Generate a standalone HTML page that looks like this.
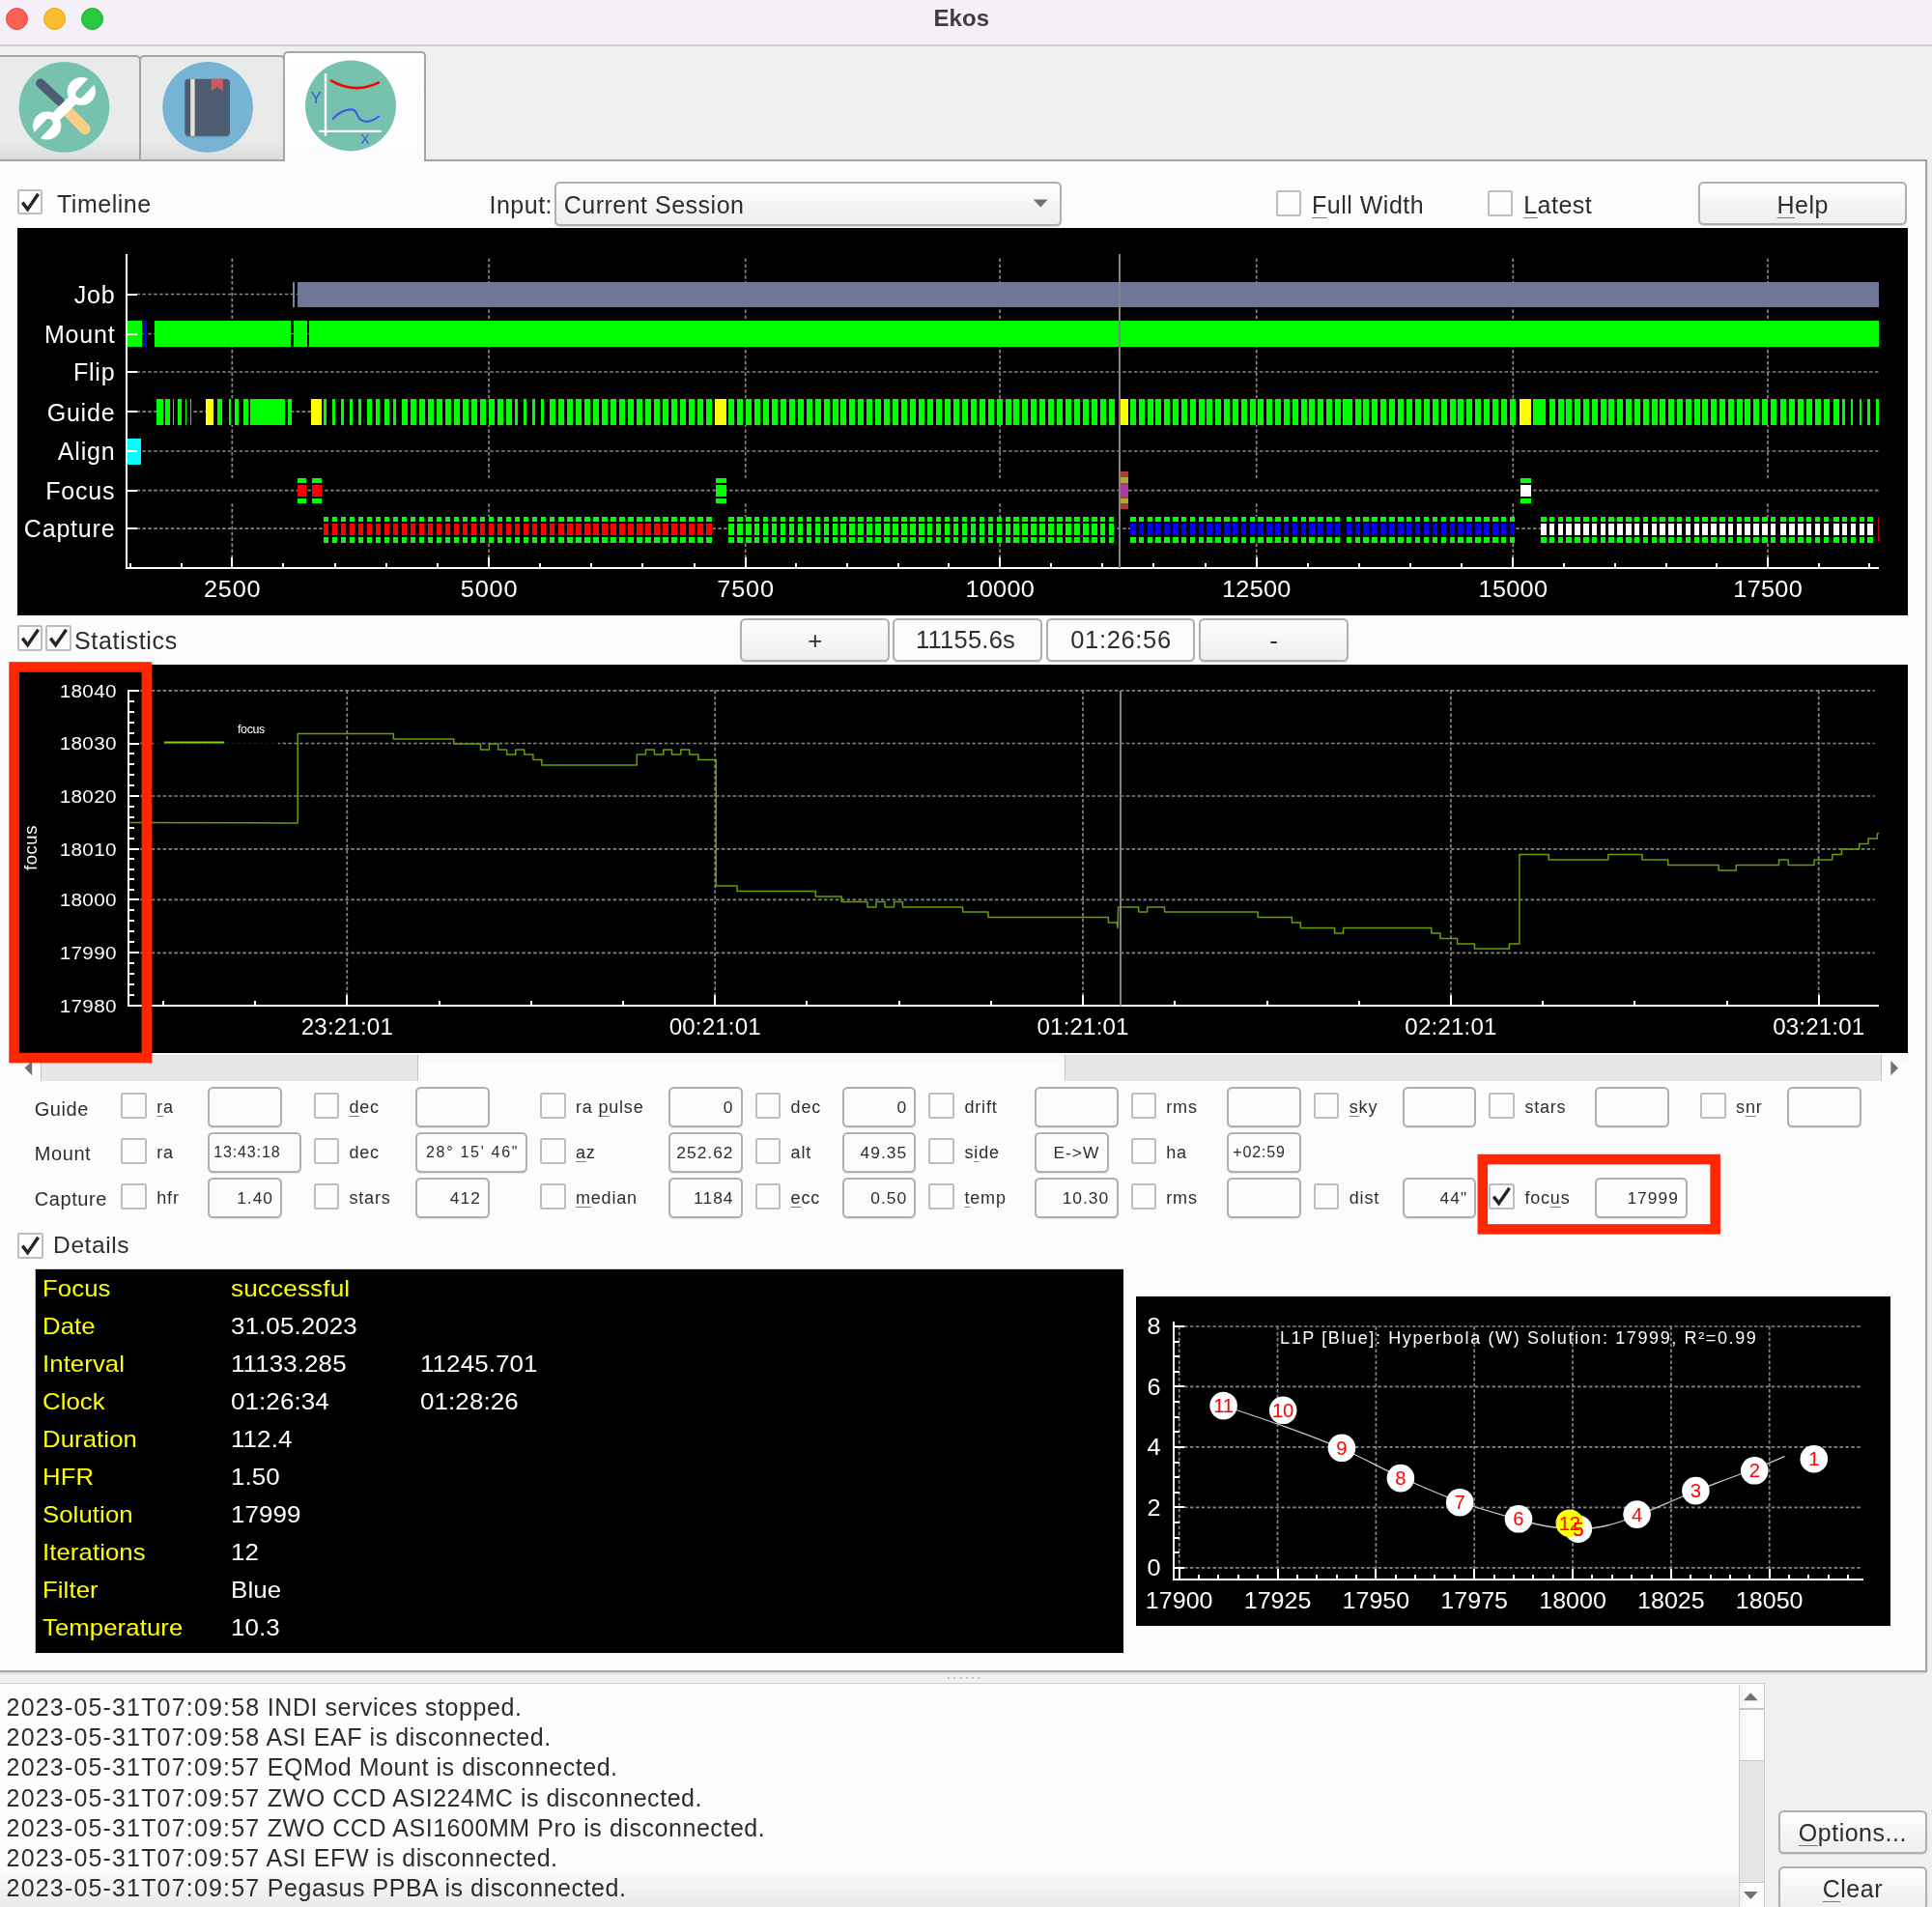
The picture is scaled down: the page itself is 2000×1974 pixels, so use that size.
<!DOCTYPE html>
<html lang="en"><head><meta charset="utf-8"><title>Ekos</title>
<style>
html,body{margin:0;padding:0;overflow:hidden}
body{width:2000px;height:1974px;position:relative;overflow:hidden;background:#eff0f1;font-family:"Liberation Sans", sans-serif;color:#2a2e32}
svg{position:absolute;left:0;top:0;font-family:"Liberation Sans", sans-serif}
.cb{position:absolute;box-sizing:border-box;width:26.5px;height:26.5px;border:2px solid #bbbdbe;border-radius:2.5px;background:#fcfcfc}
.box{position:absolute;box-sizing:border-box;border:2px solid #aeafb0;border-radius:5.5px;background:#fcfcfc;box-shadow:0 1px 1px rgba(0,0,0,.10)}
.btn{position:absolute;box-sizing:border-box;border:2px solid #aeafb0;border-radius:5.5px;background:linear-gradient(#fdfdfd,#eeeeee);box-shadow:0 1px 1px rgba(0,0,0,.12)}
u{text-decoration:underline;text-decoration-thickness:1.2px;text-underline-offset:0.15em;text-decoration-color:rgba(42,46,50,.62)}

</style></head><body><div id="root" style="position:absolute;left:0;top:0;width:2000px;height:1974px;overflow:hidden;will-change:transform">
<div style="position:absolute;left:0;top:0;width:2000px;height:46.4px;background:#f5f0f7;border-bottom:2px solid #cfcfd1"></div>
<div style="position:absolute;left:5.85px;top:7.95px;width:23.1px;height:23.1px;border-radius:50%;background:#fe5f57;box-sizing:border-box;border:1px solid #e2443d"></div>
<div style="position:absolute;left:45.05px;top:7.95px;width:23.1px;height:23.1px;border-radius:50%;background:#febc2e;box-sizing:border-box;border:1px solid #dea123"></div>
<div style="position:absolute;left:84.15px;top:7.95px;width:23.1px;height:23.1px;border-radius:50%;background:#28c840;box-sizing:border-box;border:1px solid #1aab29"></div>
<div style="position:absolute;top:6.78px;font-size:24px;line-height:24px;white-space:nowrap;color:#3f3b42;font-weight:bold;left:995.3px;transform:translateX(-50%);">Ekos</div>
<div style="position:absolute;left:-4px;top:56.7px;width:150.3px;height:110px;box-sizing:border-box;border:2px solid #a4a5a6;border-radius:5px 5px 0 0;background:linear-gradient(#e9eaea 80%,#dcdddd)"></div>
<div style="position:absolute;left:144.3px;top:56.7px;width:150.3px;height:110px;box-sizing:border-box;border:2px solid #a4a5a6;border-radius:5px 5px 0 0;background:linear-gradient(#e9eaea 80%,#dcdddd)"></div>
<div style="position:absolute;left:-3px;top:164.8px;width:1997.6px;height:1566px;box-sizing:border-box;border:2px solid #a4a5a6;background:#fcfcfc;box-shadow:0 1px 2px rgba(0,0,0,.12)"></div>
<div style="position:absolute;left:292.9px;top:52.9px;width:148.1px;height:113.8px;box-sizing:border-box;border:2px solid #a4a5a6;border-bottom:none;border-radius:5px 5px 0 0;background:linear-gradient(#ffffff,#fcfcfc)"></div>
<svg width="2000" height="175" viewBox="0 0 2000 175">
<defs><clipPath id="c1"><circle cx="66.5" cy="110.9" r="46.8"/></clipPath></defs>
<circle cx="66.5" cy="110.9" r="46.8" fill="#76c2af"/><g clip-path="url(#c1)">
<line x1="41.8" y1="86.2" x2="62" y2="105" stroke="#4f5d73" stroke-width="9.4" stroke-linecap="round"/>
<line x1="69" y1="114" x2="87.9" y2="133.3" stroke="#f5cf87" stroke-width="11.7" stroke-linecap="round"/>
<line x1="48.7" y1="130" x2="84.3" y2="94.5" stroke="#fff" stroke-width="10.5"/>
<circle cx="84.3" cy="94.5" r="14.6" fill="#fff"/><circle cx="48.7" cy="130" r="14.6" fill="#fff"/>
<line x1="82.6" y1="97" x2="100.5" y2="78" stroke="#76c2af" stroke-width="8.8" stroke-linecap="round"/>
<line x1="50.4" y1="127.5" x2="32.5" y2="146.5" stroke="#76c2af" stroke-width="8.8" stroke-linecap="round"/></g>
<circle cx="215.1" cy="110.9" r="46.8" fill="#77b3d4"/>
<rect x="191.3" y="83.3" width="46.7" height="59" rx="4" fill="#000" opacity=".12"/>
<rect x="191.3" y="81.8" width="46.7" height="59" rx="4" fill="#4f5d73"/>
<rect x="197.2" y="81.8" width="4.4" height="59" fill="#e8e4d4"/>
<path d="M218.9,81.8 H230.9 V94.3 L224.9,90 L218.9,94.3 Z" fill="#c75c5c"/>
<circle cx="363" cy="109.4" r="47" fill="#76c2af"/>
<line x1="337" y1="76" x2="337" y2="140.7" stroke="#fff" stroke-width="2.4"/>
<line x1="330.2" y1="135.9" x2="394.8" y2="135.9" stroke="#fff" stroke-width="2.4"/>
<path d="M342,83.1 Q367.5,98 392.7,85.2" fill="none" stroke="#f00" stroke-width="2.6"/>
<path d="M344.2,123.7 C352,114 366,110 369,117 C372,126 380,130 392.7,120" fill="none" stroke="#3b55e6" stroke-width="2"/>
<text x="327.1" y="106.5" font-size="17" fill="#3b55e6" text-anchor="middle">Y</text>
<text x="378" y="148.5" font-size="14" fill="#3b55e6" text-anchor="middle">X</text>
</svg>
<div class="cb" style="left:17.9px;top:195.6px"><svg width="26.5" height="26.5" viewBox="0 0 26.5 26.5" style="left:-2px;top:-2px"><path d="M5.2,13.6 L10.6,20.6 L21.6,4.8" fill="none" stroke="#232629" stroke-width="3.4" stroke-linejoin="miter"/></svg></div>
<div style="position:absolute;top:199.04px;font-size:25px;line-height:25px;white-space:nowrap;color:#2a2e32;letter-spacing:0.5px;left:59px;">Timeline</div>
<div style="position:absolute;top:199.54px;font-size:25px;line-height:25px;white-space:nowrap;color:#2a2e32;letter-spacing:0.5px;left:506.5px;">Input:</div>
<div class="btn" style="left:574.4px;top:188.2px;width:524.3px;height:45.4px"></div>
<div style="position:absolute;top:199.54px;font-size:25px;line-height:25px;white-space:nowrap;color:#2a2e32;letter-spacing:0.5px;left:583.7px;">Current Session</div>
<svg width="2000" height="240"><path d="M1069.7,206.5 h15 l-7.5,8 z" fill="#707375"/></svg>
<div class="cb" style="left:1320.7px;top:197.2px"></div>
<div style="position:absolute;top:199.54px;font-size:25px;line-height:25px;white-space:nowrap;color:#2a2e32;letter-spacing:0.5px;left:1358px;"><u>F</u>ull Width</div>
<div class="cb" style="left:1539.6px;top:197.2px"></div>
<div style="position:absolute;top:199.54px;font-size:25px;line-height:25px;white-space:nowrap;color:#2a2e32;letter-spacing:0.5px;left:1577.2px;"><u>L</u>atest</div>
<div class="btn" style="left:1758.3px;top:188.1px;width:215.6px;height:45.4px"></div>
<div style="position:absolute;top:199.54px;font-size:25px;line-height:25px;white-space:nowrap;color:#2a2e32;letter-spacing:0.5px;left:1866.25px;transform:translateX(-50%);"><u>H</u>elp</div>
<svg width="2000" height="1974" viewBox="0 0 2000 1974" shape-rendering="crispEdges">
<rect x="17.5" y="236.2" width="1957.2" height="400.6" fill="#000"/>
<g shape-rendering="geometricPrecision"><line x1="240.3" y1="267.5" x2="240.3" y2="588" stroke="#868686" stroke-width="1.7" stroke-dasharray="3.5 2.4"/><line x1="506.1" y1="267.5" x2="506.1" y2="588" stroke="#868686" stroke-width="1.7" stroke-dasharray="3.5 2.4"/><line x1="771.7" y1="267.5" x2="771.7" y2="588" stroke="#868686" stroke-width="1.7" stroke-dasharray="3.5 2.4"/><line x1="1035.1" y1="267.5" x2="1035.1" y2="588" stroke="#868686" stroke-width="1.7" stroke-dasharray="3.5 2.4"/><line x1="1300.7" y1="267.5" x2="1300.7" y2="588" stroke="#868686" stroke-width="1.7" stroke-dasharray="3.5 2.4"/><line x1="1566.3" y1="267.5" x2="1566.3" y2="588" stroke="#868686" stroke-width="1.7" stroke-dasharray="3.5 2.4"/><line x1="1830" y1="267.5" x2="1830" y2="588" stroke="#868686" stroke-width="1.7" stroke-dasharray="3.5 2.4"/></g>
<rect x="162.3" y="413.4" width="36" height="26.6" fill="#000"/><rect x="212.5" y="413.4" width="89.2" height="26.6" fill="#000"/><rect x="321.8" y="413.4" width="1623" height="26.6" fill="#000"/><rect x="334.7" y="535.2" width="403.3" height="26.5" fill="#000"/><rect x="754.1" y="535.2" width="399.3" height="26.5" fill="#000"/><rect x="1170" y="535.2" width="398.4" height="26.5" fill="#000"/><rect x="1595" y="535.2" width="349" height="26.5" fill="#000"/><rect x="238.3" y="494.9" width="4" height="26.3" fill="#000"/><rect x="504.1" y="494.9" width="4" height="26.3" fill="#000"/><rect x="769.7" y="494.9" width="4" height="26.3" fill="#000"/><rect x="1033.1" y="494.9" width="4" height="26.3" fill="#000"/><rect x="1298.7" y="494.9" width="4" height="26.3" fill="#000"/><rect x="1564.3" y="494.9" width="4" height="26.3" fill="#000"/><rect x="1828" y="494.9" width="4" height="26.3" fill="#000"/>
<g shape-rendering="geometricPrecision"><line x1="141.5" y1="304.5" x2="1944.5" y2="304.5" stroke="#868686" stroke-width="1.7" stroke-dasharray="3.5 2.4"/><line x1="141.5" y1="345.5" x2="1944.5" y2="345.5" stroke="#868686" stroke-width="1.7" stroke-dasharray="3.5 2.4"/><line x1="141.5" y1="385" x2="1944.5" y2="385" stroke="#868686" stroke-width="1.7" stroke-dasharray="3.5 2.4"/><line x1="141.5" y1="426.2" x2="1944.5" y2="426.2" stroke="#868686" stroke-width="1.7" stroke-dasharray="3.5 2.4"/><line x1="141.5" y1="467" x2="1944.5" y2="467" stroke="#868686" stroke-width="1.7" stroke-dasharray="3.5 2.4"/><line x1="141.5" y1="507.6" x2="1944.5" y2="507.6" stroke="#868686" stroke-width="1.7" stroke-dasharray="3.5 2.4"/><line x1="141.5" y1="547.1" x2="1944.5" y2="547.1" stroke="#868686" stroke-width="1.7" stroke-dasharray="3.5 2.4"/></g>
<g><rect x="162.3" y="424" width="36" height="5" fill="#000"/><rect x="212.5" y="424" width="89.2" height="5" fill="#000"/><rect x="321.8" y="424" width="1623" height="5" fill="#000"/><rect x="334.7" y="545.5" width="403.3" height="5" fill="#000"/><rect x="754.1" y="545.5" width="399.3" height="5" fill="#000"/><rect x="1170" y="545.5" width="398.4" height="5" fill="#000"/><rect x="1595" y="545.5" width="349" height="5" fill="#000"/><rect x="303.4" y="292.1" width="2" height="25.9" fill="#7c84a3"/><rect x="307.6" y="292.1" width="1636.9" height="25.9" fill="#6e7798"/><rect x="131" y="332.4" width="16.3" height="26.3" fill="#00ff00"/><rect x="149.3" y="332.4" width="3.1" height="26.3" fill="#0000ff"/><rect x="159.8" y="332.4" width="141.6" height="26.3" fill="#00ff00"/><rect x="303.6" y="332.4" width="14.4" height="26.3" fill="#00ff00"/><rect x="320" y="332.4" width="1624.5" height="26.3" fill="#00ff00"/><rect x="131" y="454.2" width="15" height="26.3" fill="#00ffff"/><rect x="334.7" y="535.2" width="5.5" height="5.2" fill="#00ff00"/><rect x="334.7" y="542" width="5.5" height="12.3" fill="#ff0000"/><rect x="334.7" y="556.3" width="5.5" height="5.4" fill="#00ff00"/><rect x="343.71" y="535.2" width="5.5" height="5.2" fill="#00ff00"/><rect x="343.71" y="542" width="5.5" height="12.3" fill="#ff0000"/><rect x="343.71" y="556.3" width="5.5" height="5.4" fill="#00ff00"/><rect x="352.72" y="535.2" width="5.5" height="5.2" fill="#00ff00"/><rect x="352.72" y="542" width="5.5" height="12.3" fill="#ff0000"/><rect x="352.72" y="556.3" width="5.5" height="5.4" fill="#00ff00"/><rect x="361.73" y="535.2" width="5.5" height="5.2" fill="#00ff00"/><rect x="361.73" y="542" width="5.5" height="12.3" fill="#ff0000"/><rect x="361.73" y="556.3" width="5.5" height="5.4" fill="#00ff00"/><rect x="370.74" y="535.2" width="5.5" height="5.2" fill="#00ff00"/><rect x="370.74" y="542" width="5.5" height="12.3" fill="#ff0000"/><rect x="370.74" y="556.3" width="5.5" height="5.4" fill="#00ff00"/><rect x="379.76" y="535.2" width="5.5" height="5.2" fill="#00ff00"/><rect x="379.76" y="542" width="5.5" height="12.3" fill="#ff0000"/><rect x="379.76" y="556.3" width="5.5" height="5.4" fill="#00ff00"/><rect x="388.77" y="535.2" width="5.5" height="5.2" fill="#00ff00"/><rect x="388.77" y="542" width="5.5" height="12.3" fill="#ff0000"/><rect x="388.77" y="556.3" width="5.5" height="5.4" fill="#00ff00"/><rect x="397.78" y="535.2" width="5.5" height="5.2" fill="#00ff00"/><rect x="397.78" y="542" width="5.5" height="12.3" fill="#ff0000"/><rect x="397.78" y="556.3" width="5.5" height="5.4" fill="#00ff00"/><rect x="406.79" y="535.2" width="5.5" height="5.2" fill="#00ff00"/><rect x="406.79" y="542" width="5.5" height="12.3" fill="#ff0000"/><rect x="406.79" y="556.3" width="5.5" height="5.4" fill="#00ff00"/><rect x="415.8" y="535.2" width="5.5" height="5.2" fill="#00ff00"/><rect x="415.8" y="542" width="5.5" height="12.3" fill="#ff0000"/><rect x="415.8" y="556.3" width="5.5" height="5.4" fill="#00ff00"/><rect x="424.81" y="535.2" width="5.5" height="5.2" fill="#00ff00"/><rect x="424.81" y="542" width="5.5" height="12.3" fill="#ff0000"/><rect x="424.81" y="556.3" width="5.5" height="5.4" fill="#00ff00"/><rect x="433.82" y="535.2" width="5.5" height="5.2" fill="#00ff00"/><rect x="433.82" y="542" width="5.5" height="12.3" fill="#ff0000"/><rect x="433.82" y="556.3" width="5.5" height="5.4" fill="#00ff00"/><rect x="442.83" y="535.2" width="5.5" height="5.2" fill="#00ff00"/><rect x="442.83" y="542" width="5.5" height="12.3" fill="#ff0000"/><rect x="442.83" y="556.3" width="5.5" height="5.4" fill="#00ff00"/><rect x="451.84" y="535.2" width="5.5" height="5.2" fill="#00ff00"/><rect x="451.84" y="542" width="5.5" height="12.3" fill="#ff0000"/><rect x="451.84" y="556.3" width="5.5" height="5.4" fill="#00ff00"/><rect x="460.85" y="535.2" width="5.5" height="5.2" fill="#00ff00"/><rect x="460.85" y="542" width="5.5" height="12.3" fill="#ff0000"/><rect x="460.85" y="556.3" width="5.5" height="5.4" fill="#00ff00"/><rect x="469.87" y="535.2" width="5.5" height="5.2" fill="#00ff00"/><rect x="469.87" y="542" width="5.5" height="12.3" fill="#ff0000"/><rect x="469.87" y="556.3" width="5.5" height="5.4" fill="#00ff00"/><rect x="478.88" y="535.2" width="5.5" height="5.2" fill="#00ff00"/><rect x="478.88" y="542" width="5.5" height="12.3" fill="#ff0000"/><rect x="478.88" y="556.3" width="5.5" height="5.4" fill="#00ff00"/><rect x="487.89" y="535.2" width="5.5" height="5.2" fill="#00ff00"/><rect x="487.89" y="542" width="5.5" height="12.3" fill="#ff0000"/><rect x="487.89" y="556.3" width="5.5" height="5.4" fill="#00ff00"/><rect x="496.9" y="535.2" width="5.5" height="5.2" fill="#00ff00"/><rect x="496.9" y="542" width="5.5" height="12.3" fill="#ff0000"/><rect x="496.9" y="556.3" width="5.5" height="5.4" fill="#00ff00"/><rect x="505.91" y="535.2" width="5.5" height="5.2" fill="#00ff00"/><rect x="505.91" y="542" width="5.5" height="12.3" fill="#ff0000"/><rect x="505.91" y="556.3" width="5.5" height="5.4" fill="#00ff00"/><rect x="514.92" y="535.2" width="5.5" height="5.2" fill="#00ff00"/><rect x="514.92" y="542" width="5.5" height="12.3" fill="#ff0000"/><rect x="514.92" y="556.3" width="5.5" height="5.4" fill="#00ff00"/><rect x="523.93" y="535.2" width="5.5" height="5.2" fill="#00ff00"/><rect x="523.93" y="542" width="5.5" height="12.3" fill="#ff0000"/><rect x="523.93" y="556.3" width="5.5" height="5.4" fill="#00ff00"/><rect x="532.94" y="535.2" width="5.5" height="5.2" fill="#00ff00"/><rect x="532.94" y="542" width="5.5" height="12.3" fill="#ff0000"/><rect x="532.94" y="556.3" width="5.5" height="5.4" fill="#00ff00"/><rect x="541.95" y="535.2" width="5.5" height="5.2" fill="#00ff00"/><rect x="541.95" y="542" width="5.5" height="12.3" fill="#ff0000"/><rect x="541.95" y="556.3" width="5.5" height="5.4" fill="#00ff00"/><rect x="550.96" y="535.2" width="5.5" height="5.2" fill="#00ff00"/><rect x="550.96" y="542" width="5.5" height="12.3" fill="#ff0000"/><rect x="550.96" y="556.3" width="5.5" height="5.4" fill="#00ff00"/><rect x="559.98" y="535.2" width="5.5" height="5.2" fill="#00ff00"/><rect x="559.98" y="542" width="5.5" height="12.3" fill="#ff0000"/><rect x="559.98" y="556.3" width="5.5" height="5.4" fill="#00ff00"/><rect x="568.99" y="535.2" width="5.5" height="5.2" fill="#00ff00"/><rect x="568.99" y="542" width="5.5" height="12.3" fill="#ff0000"/><rect x="568.99" y="556.3" width="5.5" height="5.4" fill="#00ff00"/><rect x="578" y="535.2" width="5.5" height="5.2" fill="#00ff00"/><rect x="578" y="542" width="5.5" height="12.3" fill="#ff0000"/><rect x="578" y="556.3" width="5.5" height="5.4" fill="#00ff00"/><rect x="587.01" y="535.2" width="5.5" height="5.2" fill="#00ff00"/><rect x="587.01" y="542" width="5.5" height="12.3" fill="#ff0000"/><rect x="587.01" y="556.3" width="5.5" height="5.4" fill="#00ff00"/><rect x="596.02" y="535.2" width="5.5" height="5.2" fill="#00ff00"/><rect x="596.02" y="542" width="5.5" height="12.3" fill="#ff0000"/><rect x="596.02" y="556.3" width="5.5" height="5.4" fill="#00ff00"/><rect x="605.03" y="535.2" width="5.5" height="5.2" fill="#00ff00"/><rect x="605.03" y="542" width="5.5" height="12.3" fill="#ff0000"/><rect x="605.03" y="556.3" width="5.5" height="5.4" fill="#00ff00"/><rect x="614.04" y="535.2" width="5.5" height="5.2" fill="#00ff00"/><rect x="614.04" y="542" width="5.5" height="12.3" fill="#ff0000"/><rect x="614.04" y="556.3" width="5.5" height="5.4" fill="#00ff00"/><rect x="623.05" y="535.2" width="5.5" height="5.2" fill="#00ff00"/><rect x="623.05" y="542" width="5.5" height="12.3" fill="#ff0000"/><rect x="623.05" y="556.3" width="5.5" height="5.4" fill="#00ff00"/><rect x="632.06" y="535.2" width="5.5" height="5.2" fill="#00ff00"/><rect x="632.06" y="542" width="5.5" height="12.3" fill="#ff0000"/><rect x="632.06" y="556.3" width="5.5" height="5.4" fill="#00ff00"/><rect x="641.07" y="535.2" width="5.5" height="5.2" fill="#00ff00"/><rect x="641.07" y="542" width="5.5" height="12.3" fill="#ff0000"/><rect x="641.07" y="556.3" width="5.5" height="5.4" fill="#00ff00"/><rect x="650.08" y="535.2" width="5.5" height="5.2" fill="#00ff00"/><rect x="650.08" y="542" width="5.5" height="12.3" fill="#ff0000"/><rect x="650.08" y="556.3" width="5.5" height="5.4" fill="#00ff00"/><rect x="659.1" y="535.2" width="5.5" height="5.2" fill="#00ff00"/><rect x="659.1" y="542" width="5.5" height="12.3" fill="#ff0000"/><rect x="659.1" y="556.3" width="5.5" height="5.4" fill="#00ff00"/><rect x="668.11" y="535.2" width="5.5" height="5.2" fill="#00ff00"/><rect x="668.11" y="542" width="5.5" height="12.3" fill="#ff0000"/><rect x="668.11" y="556.3" width="5.5" height="5.4" fill="#00ff00"/><rect x="677.12" y="535.2" width="5.5" height="5.2" fill="#00ff00"/><rect x="677.12" y="542" width="5.5" height="12.3" fill="#ff0000"/><rect x="677.12" y="556.3" width="5.5" height="5.4" fill="#00ff00"/><rect x="686.13" y="535.2" width="5.5" height="5.2" fill="#00ff00"/><rect x="686.13" y="542" width="5.5" height="12.3" fill="#ff0000"/><rect x="686.13" y="556.3" width="5.5" height="5.4" fill="#00ff00"/><rect x="695.14" y="535.2" width="5.5" height="5.2" fill="#00ff00"/><rect x="695.14" y="542" width="5.5" height="12.3" fill="#ff0000"/><rect x="695.14" y="556.3" width="5.5" height="5.4" fill="#00ff00"/><rect x="704.15" y="535.2" width="5.5" height="5.2" fill="#00ff00"/><rect x="704.15" y="542" width="5.5" height="12.3" fill="#ff0000"/><rect x="704.15" y="556.3" width="5.5" height="5.4" fill="#00ff00"/><rect x="713.16" y="535.2" width="5.5" height="5.2" fill="#00ff00"/><rect x="713.16" y="542" width="5.5" height="12.3" fill="#ff0000"/><rect x="713.16" y="556.3" width="5.5" height="5.4" fill="#00ff00"/><rect x="722.17" y="535.2" width="5.5" height="5.2" fill="#00ff00"/><rect x="722.17" y="542" width="5.5" height="12.3" fill="#ff0000"/><rect x="722.17" y="556.3" width="5.5" height="5.4" fill="#00ff00"/><rect x="731.18" y="535.2" width="5.5" height="5.2" fill="#00ff00"/><rect x="731.18" y="542" width="5.5" height="12.3" fill="#ff0000"/><rect x="731.18" y="556.3" width="5.5" height="5.4" fill="#00ff00"/><rect x="754.1" y="535.2" width="5.5" height="5.2" fill="#00ff00"/><rect x="754.1" y="542" width="5.5" height="12.3" fill="#00ff00"/><rect x="754.1" y="556.3" width="5.5" height="5.4" fill="#00ff00"/><rect x="763.05" y="535.2" width="5.5" height="5.2" fill="#00ff00"/><rect x="763.05" y="542" width="5.5" height="12.3" fill="#00ff00"/><rect x="763.05" y="556.3" width="5.5" height="5.4" fill="#00ff00"/><rect x="772" y="535.2" width="5.5" height="5.2" fill="#00ff00"/><rect x="772" y="542" width="5.5" height="12.3" fill="#00ff00"/><rect x="772" y="556.3" width="5.5" height="5.4" fill="#00ff00"/><rect x="780.95" y="535.2" width="5.5" height="5.2" fill="#00ff00"/><rect x="780.95" y="542" width="5.5" height="12.3" fill="#00ff00"/><rect x="780.95" y="556.3" width="5.5" height="5.4" fill="#00ff00"/><rect x="789.9" y="535.2" width="5.5" height="5.2" fill="#00ff00"/><rect x="789.9" y="542" width="5.5" height="12.3" fill="#00ff00"/><rect x="789.9" y="556.3" width="5.5" height="5.4" fill="#00ff00"/><rect x="798.85" y="535.2" width="5.5" height="5.2" fill="#00ff00"/><rect x="798.85" y="542" width="5.5" height="12.3" fill="#00ff00"/><rect x="798.85" y="556.3" width="5.5" height="5.4" fill="#00ff00"/><rect x="807.8" y="535.2" width="5.5" height="5.2" fill="#00ff00"/><rect x="807.8" y="542" width="5.5" height="12.3" fill="#00ff00"/><rect x="807.8" y="556.3" width="5.5" height="5.4" fill="#00ff00"/><rect x="816.75" y="535.2" width="5.5" height="5.2" fill="#00ff00"/><rect x="816.75" y="542" width="5.5" height="12.3" fill="#00ff00"/><rect x="816.75" y="556.3" width="5.5" height="5.4" fill="#00ff00"/><rect x="825.7" y="535.2" width="5.5" height="5.2" fill="#00ff00"/><rect x="825.7" y="542" width="5.5" height="12.3" fill="#00ff00"/><rect x="825.7" y="556.3" width="5.5" height="5.4" fill="#00ff00"/><rect x="834.65" y="535.2" width="5.5" height="5.2" fill="#00ff00"/><rect x="834.65" y="542" width="5.5" height="12.3" fill="#00ff00"/><rect x="834.65" y="556.3" width="5.5" height="5.4" fill="#00ff00"/><rect x="843.6" y="535.2" width="5.5" height="5.2" fill="#00ff00"/><rect x="843.6" y="542" width="5.5" height="12.3" fill="#00ff00"/><rect x="843.6" y="556.3" width="5.5" height="5.4" fill="#00ff00"/><rect x="852.55" y="535.2" width="5.5" height="5.2" fill="#00ff00"/><rect x="852.55" y="542" width="5.5" height="12.3" fill="#00ff00"/><rect x="852.55" y="556.3" width="5.5" height="5.4" fill="#00ff00"/><rect x="861.5" y="535.2" width="5.5" height="5.2" fill="#00ff00"/><rect x="861.5" y="542" width="5.5" height="12.3" fill="#00ff00"/><rect x="861.5" y="556.3" width="5.5" height="5.4" fill="#00ff00"/><rect x="870.45" y="535.2" width="5.5" height="5.2" fill="#00ff00"/><rect x="870.45" y="542" width="5.5" height="12.3" fill="#00ff00"/><rect x="870.45" y="556.3" width="5.5" height="5.4" fill="#00ff00"/><rect x="879.4" y="535.2" width="5.5" height="5.2" fill="#00ff00"/><rect x="879.4" y="542" width="5.5" height="12.3" fill="#00ff00"/><rect x="879.4" y="556.3" width="5.5" height="5.4" fill="#00ff00"/><rect x="888.35" y="535.2" width="5.5" height="5.2" fill="#00ff00"/><rect x="888.35" y="542" width="5.5" height="12.3" fill="#00ff00"/><rect x="888.35" y="556.3" width="5.5" height="5.4" fill="#00ff00"/><rect x="897.3" y="535.2" width="5.5" height="5.2" fill="#00ff00"/><rect x="897.3" y="542" width="5.5" height="12.3" fill="#00ff00"/><rect x="897.3" y="556.3" width="5.5" height="5.4" fill="#00ff00"/><rect x="906.25" y="535.2" width="5.5" height="5.2" fill="#00ff00"/><rect x="906.25" y="542" width="5.5" height="12.3" fill="#00ff00"/><rect x="906.25" y="556.3" width="5.5" height="5.4" fill="#00ff00"/><rect x="915.2" y="535.2" width="5.5" height="5.2" fill="#00ff00"/><rect x="915.2" y="542" width="5.5" height="12.3" fill="#00ff00"/><rect x="915.2" y="556.3" width="5.5" height="5.4" fill="#00ff00"/><rect x="924.15" y="535.2" width="5.5" height="5.2" fill="#00ff00"/><rect x="924.15" y="542" width="5.5" height="12.3" fill="#00ff00"/><rect x="924.15" y="556.3" width="5.5" height="5.4" fill="#00ff00"/><rect x="933.1" y="535.2" width="5.5" height="5.2" fill="#00ff00"/><rect x="933.1" y="542" width="5.5" height="12.3" fill="#00ff00"/><rect x="933.1" y="556.3" width="5.5" height="5.4" fill="#00ff00"/><rect x="942.05" y="535.2" width="5.5" height="5.2" fill="#00ff00"/><rect x="942.05" y="542" width="5.5" height="12.3" fill="#00ff00"/><rect x="942.05" y="556.3" width="5.5" height="5.4" fill="#00ff00"/><rect x="951" y="535.2" width="5.5" height="5.2" fill="#00ff00"/><rect x="951" y="542" width="5.5" height="12.3" fill="#00ff00"/><rect x="951" y="556.3" width="5.5" height="5.4" fill="#00ff00"/><rect x="959.95" y="535.2" width="5.5" height="5.2" fill="#00ff00"/><rect x="959.95" y="542" width="5.5" height="12.3" fill="#00ff00"/><rect x="959.95" y="556.3" width="5.5" height="5.4" fill="#00ff00"/><rect x="968.9" y="535.2" width="5.5" height="5.2" fill="#00ff00"/><rect x="968.9" y="542" width="5.5" height="12.3" fill="#00ff00"/><rect x="968.9" y="556.3" width="5.5" height="5.4" fill="#00ff00"/><rect x="977.85" y="535.2" width="5.5" height="5.2" fill="#00ff00"/><rect x="977.85" y="542" width="5.5" height="12.3" fill="#00ff00"/><rect x="977.85" y="556.3" width="5.5" height="5.4" fill="#00ff00"/><rect x="986.8" y="535.2" width="5.5" height="5.2" fill="#00ff00"/><rect x="986.8" y="542" width="5.5" height="12.3" fill="#00ff00"/><rect x="986.8" y="556.3" width="5.5" height="5.4" fill="#00ff00"/><rect x="995.75" y="535.2" width="5.5" height="5.2" fill="#00ff00"/><rect x="995.75" y="542" width="5.5" height="12.3" fill="#00ff00"/><rect x="995.75" y="556.3" width="5.5" height="5.4" fill="#00ff00"/><rect x="1004.7" y="535.2" width="5.5" height="5.2" fill="#00ff00"/><rect x="1004.7" y="542" width="5.5" height="12.3" fill="#00ff00"/><rect x="1004.7" y="556.3" width="5.5" height="5.4" fill="#00ff00"/><rect x="1013.65" y="535.2" width="5.5" height="5.2" fill="#00ff00"/><rect x="1013.65" y="542" width="5.5" height="12.3" fill="#00ff00"/><rect x="1013.65" y="556.3" width="5.5" height="5.4" fill="#00ff00"/><rect x="1022.6" y="535.2" width="5.5" height="5.2" fill="#00ff00"/><rect x="1022.6" y="542" width="5.5" height="12.3" fill="#00ff00"/><rect x="1022.6" y="556.3" width="5.5" height="5.4" fill="#00ff00"/><rect x="1031.55" y="535.2" width="5.5" height="5.2" fill="#00ff00"/><rect x="1031.55" y="542" width="5.5" height="12.3" fill="#00ff00"/><rect x="1031.55" y="556.3" width="5.5" height="5.4" fill="#00ff00"/><rect x="1040.5" y="535.2" width="5.5" height="5.2" fill="#00ff00"/><rect x="1040.5" y="542" width="5.5" height="12.3" fill="#00ff00"/><rect x="1040.5" y="556.3" width="5.5" height="5.4" fill="#00ff00"/><rect x="1049.45" y="535.2" width="5.5" height="5.2" fill="#00ff00"/><rect x="1049.45" y="542" width="5.5" height="12.3" fill="#00ff00"/><rect x="1049.45" y="556.3" width="5.5" height="5.4" fill="#00ff00"/><rect x="1058.4" y="535.2" width="5.5" height="5.2" fill="#00ff00"/><rect x="1058.4" y="542" width="5.5" height="12.3" fill="#00ff00"/><rect x="1058.4" y="556.3" width="5.5" height="5.4" fill="#00ff00"/><rect x="1067.35" y="535.2" width="5.5" height="5.2" fill="#00ff00"/><rect x="1067.35" y="542" width="5.5" height="12.3" fill="#00ff00"/><rect x="1067.35" y="556.3" width="5.5" height="5.4" fill="#00ff00"/><rect x="1076.3" y="535.2" width="5.5" height="5.2" fill="#00ff00"/><rect x="1076.3" y="542" width="5.5" height="12.3" fill="#00ff00"/><rect x="1076.3" y="556.3" width="5.5" height="5.4" fill="#00ff00"/><rect x="1085.25" y="535.2" width="5.5" height="5.2" fill="#00ff00"/><rect x="1085.25" y="542" width="5.5" height="12.3" fill="#00ff00"/><rect x="1085.25" y="556.3" width="5.5" height="5.4" fill="#00ff00"/><rect x="1094.2" y="535.2" width="5.5" height="5.2" fill="#00ff00"/><rect x="1094.2" y="542" width="5.5" height="12.3" fill="#00ff00"/><rect x="1094.2" y="556.3" width="5.5" height="5.4" fill="#00ff00"/><rect x="1103.15" y="535.2" width="5.5" height="5.2" fill="#00ff00"/><rect x="1103.15" y="542" width="5.5" height="12.3" fill="#00ff00"/><rect x="1103.15" y="556.3" width="5.5" height="5.4" fill="#00ff00"/><rect x="1112.1" y="535.2" width="5.5" height="5.2" fill="#00ff00"/><rect x="1112.1" y="542" width="5.5" height="12.3" fill="#00ff00"/><rect x="1112.1" y="556.3" width="5.5" height="5.4" fill="#00ff00"/><rect x="1121.05" y="535.2" width="5.5" height="5.2" fill="#00ff00"/><rect x="1121.05" y="542" width="5.5" height="12.3" fill="#00ff00"/><rect x="1121.05" y="556.3" width="5.5" height="5.4" fill="#00ff00"/><rect x="1130" y="535.2" width="5.5" height="5.2" fill="#00ff00"/><rect x="1130" y="542" width="5.5" height="12.3" fill="#00ff00"/><rect x="1130" y="556.3" width="5.5" height="5.4" fill="#00ff00"/><rect x="1138.95" y="535.2" width="5.5" height="5.2" fill="#00ff00"/><rect x="1138.95" y="542" width="5.5" height="12.3" fill="#00ff00"/><rect x="1138.95" y="556.3" width="5.5" height="5.4" fill="#00ff00"/><rect x="1147.9" y="535.2" width="5.5" height="5.2" fill="#00ff00"/><rect x="1147.9" y="542" width="5.5" height="12.3" fill="#00ff00"/><rect x="1147.9" y="556.3" width="5.5" height="5.4" fill="#00ff00"/><rect x="1170" y="535.2" width="5.5" height="5.2" fill="#00ff00"/><rect x="1170" y="542" width="5.5" height="12.3" fill="#0000ff"/><rect x="1170" y="556.3" width="5.5" height="5.4" fill="#00ff00"/><rect x="1178.83" y="535.2" width="5.5" height="5.2" fill="#00ff00"/><rect x="1178.83" y="542" width="5.5" height="12.3" fill="#0000ff"/><rect x="1178.83" y="556.3" width="5.5" height="5.4" fill="#00ff00"/><rect x="1187.66" y="535.2" width="5.5" height="5.2" fill="#00ff00"/><rect x="1187.66" y="542" width="5.5" height="12.3" fill="#0000ff"/><rect x="1187.66" y="556.3" width="5.5" height="5.4" fill="#00ff00"/><rect x="1196.49" y="535.2" width="5.5" height="5.2" fill="#00ff00"/><rect x="1196.49" y="542" width="5.5" height="12.3" fill="#0000ff"/><rect x="1196.49" y="556.3" width="5.5" height="5.4" fill="#00ff00"/><rect x="1205.32" y="535.2" width="5.5" height="5.2" fill="#00ff00"/><rect x="1205.32" y="542" width="5.5" height="12.3" fill="#0000ff"/><rect x="1205.32" y="556.3" width="5.5" height="5.4" fill="#00ff00"/><rect x="1214.15" y="535.2" width="5.5" height="5.2" fill="#00ff00"/><rect x="1214.15" y="542" width="5.5" height="12.3" fill="#0000ff"/><rect x="1214.15" y="556.3" width="5.5" height="5.4" fill="#00ff00"/><rect x="1222.98" y="535.2" width="5.5" height="5.2" fill="#00ff00"/><rect x="1222.98" y="542" width="5.5" height="12.3" fill="#0000ff"/><rect x="1222.98" y="556.3" width="5.5" height="5.4" fill="#00ff00"/><rect x="1231.81" y="535.2" width="5.5" height="5.2" fill="#00ff00"/><rect x="1231.81" y="542" width="5.5" height="12.3" fill="#0000ff"/><rect x="1231.81" y="556.3" width="5.5" height="5.4" fill="#00ff00"/><rect x="1240.64" y="535.2" width="5.5" height="5.2" fill="#00ff00"/><rect x="1240.64" y="542" width="5.5" height="12.3" fill="#0000ff"/><rect x="1240.64" y="556.3" width="5.5" height="5.4" fill="#00ff00"/><rect x="1249.47" y="535.2" width="5.5" height="5.2" fill="#00ff00"/><rect x="1249.47" y="542" width="5.5" height="12.3" fill="#0000ff"/><rect x="1249.47" y="556.3" width="5.5" height="5.4" fill="#00ff00"/><rect x="1258.3" y="535.2" width="5.5" height="5.2" fill="#00ff00"/><rect x="1258.3" y="542" width="5.5" height="12.3" fill="#0000ff"/><rect x="1258.3" y="556.3" width="5.5" height="5.4" fill="#00ff00"/><rect x="1267.13" y="535.2" width="5.5" height="5.2" fill="#00ff00"/><rect x="1267.13" y="542" width="5.5" height="12.3" fill="#0000ff"/><rect x="1267.13" y="556.3" width="5.5" height="5.4" fill="#00ff00"/><rect x="1275.96" y="535.2" width="5.5" height="5.2" fill="#00ff00"/><rect x="1275.96" y="542" width="5.5" height="12.3" fill="#0000ff"/><rect x="1275.96" y="556.3" width="5.5" height="5.4" fill="#00ff00"/><rect x="1284.79" y="535.2" width="5.5" height="5.2" fill="#00ff00"/><rect x="1284.79" y="542" width="5.5" height="12.3" fill="#0000ff"/><rect x="1284.79" y="556.3" width="5.5" height="5.4" fill="#00ff00"/><rect x="1293.62" y="535.2" width="5.5" height="5.2" fill="#00ff00"/><rect x="1293.62" y="542" width="5.5" height="12.3" fill="#0000ff"/><rect x="1293.62" y="556.3" width="5.5" height="5.4" fill="#00ff00"/><rect x="1302.45" y="535.2" width="5.5" height="5.2" fill="#00ff00"/><rect x="1302.45" y="542" width="5.5" height="12.3" fill="#0000ff"/><rect x="1302.45" y="556.3" width="5.5" height="5.4" fill="#00ff00"/><rect x="1311.28" y="535.2" width="5.5" height="5.2" fill="#00ff00"/><rect x="1311.28" y="542" width="5.5" height="12.3" fill="#0000ff"/><rect x="1311.28" y="556.3" width="5.5" height="5.4" fill="#00ff00"/><rect x="1320.11" y="535.2" width="5.5" height="5.2" fill="#00ff00"/><rect x="1320.11" y="542" width="5.5" height="12.3" fill="#0000ff"/><rect x="1320.11" y="556.3" width="5.5" height="5.4" fill="#00ff00"/><rect x="1328.94" y="535.2" width="5.5" height="5.2" fill="#00ff00"/><rect x="1328.94" y="542" width="5.5" height="12.3" fill="#0000ff"/><rect x="1328.94" y="556.3" width="5.5" height="5.4" fill="#00ff00"/><rect x="1337.77" y="535.2" width="5.5" height="5.2" fill="#00ff00"/><rect x="1337.77" y="542" width="5.5" height="12.3" fill="#0000ff"/><rect x="1337.77" y="556.3" width="5.5" height="5.4" fill="#00ff00"/><rect x="1346.6" y="535.2" width="5.5" height="5.2" fill="#00ff00"/><rect x="1346.6" y="542" width="5.5" height="12.3" fill="#0000ff"/><rect x="1346.6" y="556.3" width="5.5" height="5.4" fill="#00ff00"/><rect x="1355.43" y="535.2" width="5.5" height="5.2" fill="#00ff00"/><rect x="1355.43" y="542" width="5.5" height="12.3" fill="#0000ff"/><rect x="1355.43" y="556.3" width="5.5" height="5.4" fill="#00ff00"/><rect x="1364.26" y="535.2" width="5.5" height="5.2" fill="#00ff00"/><rect x="1364.26" y="542" width="5.5" height="12.3" fill="#0000ff"/><rect x="1364.26" y="556.3" width="5.5" height="5.4" fill="#00ff00"/><rect x="1373.09" y="535.2" width="5.5" height="5.2" fill="#00ff00"/><rect x="1373.09" y="542" width="5.5" height="12.3" fill="#0000ff"/><rect x="1373.09" y="556.3" width="5.5" height="5.4" fill="#00ff00"/><rect x="1381.92" y="535.2" width="5.5" height="5.2" fill="#00ff00"/><rect x="1381.92" y="542" width="5.5" height="12.3" fill="#0000ff"/><rect x="1381.92" y="556.3" width="5.5" height="5.4" fill="#00ff00"/><rect x="1393.6" y="535.2" width="5.5" height="5.2" fill="#00ff00"/><rect x="1393.6" y="542" width="5.5" height="12.3" fill="#0000ff"/><rect x="1393.6" y="556.3" width="5.5" height="5.4" fill="#00ff00"/><rect x="1402.51" y="535.2" width="5.5" height="5.2" fill="#00ff00"/><rect x="1402.51" y="542" width="5.5" height="12.3" fill="#0000ff"/><rect x="1402.51" y="556.3" width="5.5" height="5.4" fill="#00ff00"/><rect x="1411.42" y="535.2" width="5.5" height="5.2" fill="#00ff00"/><rect x="1411.42" y="542" width="5.5" height="12.3" fill="#0000ff"/><rect x="1411.42" y="556.3" width="5.5" height="5.4" fill="#00ff00"/><rect x="1420.33" y="535.2" width="5.5" height="5.2" fill="#00ff00"/><rect x="1420.33" y="542" width="5.5" height="12.3" fill="#0000ff"/><rect x="1420.33" y="556.3" width="5.5" height="5.4" fill="#00ff00"/><rect x="1429.24" y="535.2" width="5.5" height="5.2" fill="#00ff00"/><rect x="1429.24" y="542" width="5.5" height="12.3" fill="#0000ff"/><rect x="1429.24" y="556.3" width="5.5" height="5.4" fill="#00ff00"/><rect x="1438.15" y="535.2" width="5.5" height="5.2" fill="#00ff00"/><rect x="1438.15" y="542" width="5.5" height="12.3" fill="#0000ff"/><rect x="1438.15" y="556.3" width="5.5" height="5.4" fill="#00ff00"/><rect x="1447.06" y="535.2" width="5.5" height="5.2" fill="#00ff00"/><rect x="1447.06" y="542" width="5.5" height="12.3" fill="#0000ff"/><rect x="1447.06" y="556.3" width="5.5" height="5.4" fill="#00ff00"/><rect x="1455.97" y="535.2" width="5.5" height="5.2" fill="#00ff00"/><rect x="1455.97" y="542" width="5.5" height="12.3" fill="#0000ff"/><rect x="1455.97" y="556.3" width="5.5" height="5.4" fill="#00ff00"/><rect x="1464.88" y="535.2" width="5.5" height="5.2" fill="#00ff00"/><rect x="1464.88" y="542" width="5.5" height="12.3" fill="#0000ff"/><rect x="1464.88" y="556.3" width="5.5" height="5.4" fill="#00ff00"/><rect x="1473.79" y="535.2" width="5.5" height="5.2" fill="#00ff00"/><rect x="1473.79" y="542" width="5.5" height="12.3" fill="#0000ff"/><rect x="1473.79" y="556.3" width="5.5" height="5.4" fill="#00ff00"/><rect x="1482.7" y="535.2" width="5.5" height="5.2" fill="#00ff00"/><rect x="1482.7" y="542" width="5.5" height="12.3" fill="#0000ff"/><rect x="1482.7" y="556.3" width="5.5" height="5.4" fill="#00ff00"/><rect x="1491.61" y="535.2" width="5.5" height="5.2" fill="#00ff00"/><rect x="1491.61" y="542" width="5.5" height="12.3" fill="#0000ff"/><rect x="1491.61" y="556.3" width="5.5" height="5.4" fill="#00ff00"/><rect x="1500.52" y="535.2" width="5.5" height="5.2" fill="#00ff00"/><rect x="1500.52" y="542" width="5.5" height="12.3" fill="#0000ff"/><rect x="1500.52" y="556.3" width="5.5" height="5.4" fill="#00ff00"/><rect x="1509.43" y="535.2" width="5.5" height="5.2" fill="#00ff00"/><rect x="1509.43" y="542" width="5.5" height="12.3" fill="#0000ff"/><rect x="1509.43" y="556.3" width="5.5" height="5.4" fill="#00ff00"/><rect x="1518.34" y="535.2" width="5.5" height="5.2" fill="#00ff00"/><rect x="1518.34" y="542" width="5.5" height="12.3" fill="#0000ff"/><rect x="1518.34" y="556.3" width="5.5" height="5.4" fill="#00ff00"/><rect x="1527.25" y="535.2" width="5.5" height="5.2" fill="#00ff00"/><rect x="1527.25" y="542" width="5.5" height="12.3" fill="#0000ff"/><rect x="1527.25" y="556.3" width="5.5" height="5.4" fill="#00ff00"/><rect x="1536.16" y="535.2" width="5.5" height="5.2" fill="#00ff00"/><rect x="1536.16" y="542" width="5.5" height="12.3" fill="#0000ff"/><rect x="1536.16" y="556.3" width="5.5" height="5.4" fill="#00ff00"/><rect x="1545.07" y="535.2" width="5.5" height="5.2" fill="#00ff00"/><rect x="1545.07" y="542" width="5.5" height="12.3" fill="#0000ff"/><rect x="1545.07" y="556.3" width="5.5" height="5.4" fill="#00ff00"/><rect x="1553.98" y="535.2" width="5.5" height="5.2" fill="#00ff00"/><rect x="1553.98" y="542" width="5.5" height="12.3" fill="#0000ff"/><rect x="1553.98" y="556.3" width="5.5" height="5.4" fill="#00ff00"/><rect x="1562.89" y="535.2" width="5.5" height="5.2" fill="#00ff00"/><rect x="1562.89" y="542" width="5.5" height="12.3" fill="#0000ff"/><rect x="1562.89" y="556.3" width="5.5" height="5.4" fill="#00ff00"/><rect x="1595" y="535.2" width="5.5" height="5.2" fill="#00ff00"/><rect x="1595" y="542" width="5.5" height="12.3" fill="#ffffff"/><rect x="1595" y="556.3" width="5.5" height="5.4" fill="#00ff00"/><rect x="1603.81" y="535.2" width="5.5" height="5.2" fill="#00ff00"/><rect x="1603.81" y="542" width="5.5" height="12.3" fill="#ffffff"/><rect x="1603.81" y="556.3" width="5.5" height="5.4" fill="#00ff00"/><rect x="1612.62" y="535.2" width="5.5" height="5.2" fill="#00ff00"/><rect x="1612.62" y="542" width="5.5" height="12.3" fill="#ffffff"/><rect x="1612.62" y="556.3" width="5.5" height="5.4" fill="#00ff00"/><rect x="1621.43" y="535.2" width="5.5" height="5.2" fill="#00ff00"/><rect x="1621.43" y="542" width="5.5" height="12.3" fill="#ffffff"/><rect x="1621.43" y="556.3" width="5.5" height="5.4" fill="#00ff00"/><rect x="1630.24" y="535.2" width="5.5" height="5.2" fill="#00ff00"/><rect x="1630.24" y="542" width="5.5" height="12.3" fill="#ffffff"/><rect x="1630.24" y="556.3" width="5.5" height="5.4" fill="#00ff00"/><rect x="1639.05" y="535.2" width="5.5" height="5.2" fill="#00ff00"/><rect x="1639.05" y="542" width="5.5" height="12.3" fill="#ffffff"/><rect x="1639.05" y="556.3" width="5.5" height="5.4" fill="#00ff00"/><rect x="1647.86" y="535.2" width="5.5" height="5.2" fill="#00ff00"/><rect x="1647.86" y="542" width="5.5" height="12.3" fill="#ffffff"/><rect x="1647.86" y="556.3" width="5.5" height="5.4" fill="#00ff00"/><rect x="1656.67" y="535.2" width="5.5" height="5.2" fill="#00ff00"/><rect x="1656.67" y="542" width="5.5" height="12.3" fill="#ffffff"/><rect x="1656.67" y="556.3" width="5.5" height="5.4" fill="#00ff00"/><rect x="1665.48" y="535.2" width="5.5" height="5.2" fill="#00ff00"/><rect x="1665.48" y="542" width="5.5" height="12.3" fill="#ffffff"/><rect x="1665.48" y="556.3" width="5.5" height="5.4" fill="#00ff00"/><rect x="1674.29" y="535.2" width="5.5" height="5.2" fill="#00ff00"/><rect x="1674.29" y="542" width="5.5" height="12.3" fill="#ffffff"/><rect x="1674.29" y="556.3" width="5.5" height="5.4" fill="#00ff00"/><rect x="1683.1" y="535.2" width="5.5" height="5.2" fill="#00ff00"/><rect x="1683.1" y="542" width="5.5" height="12.3" fill="#ffffff"/><rect x="1683.1" y="556.3" width="5.5" height="5.4" fill="#00ff00"/><rect x="1691.91" y="535.2" width="5.5" height="5.2" fill="#00ff00"/><rect x="1691.91" y="542" width="5.5" height="12.3" fill="#ffffff"/><rect x="1691.91" y="556.3" width="5.5" height="5.4" fill="#00ff00"/><rect x="1700.72" y="535.2" width="5.5" height="5.2" fill="#00ff00"/><rect x="1700.72" y="542" width="5.5" height="12.3" fill="#ffffff"/><rect x="1700.72" y="556.3" width="5.5" height="5.4" fill="#00ff00"/><rect x="1709.53" y="535.2" width="5.5" height="5.2" fill="#00ff00"/><rect x="1709.53" y="542" width="5.5" height="12.3" fill="#ffffff"/><rect x="1709.53" y="556.3" width="5.5" height="5.4" fill="#00ff00"/><rect x="1718.34" y="535.2" width="5.5" height="5.2" fill="#00ff00"/><rect x="1718.34" y="542" width="5.5" height="12.3" fill="#ffffff"/><rect x="1718.34" y="556.3" width="5.5" height="5.4" fill="#00ff00"/><rect x="1727.15" y="535.2" width="5.5" height="5.2" fill="#00ff00"/><rect x="1727.15" y="542" width="5.5" height="12.3" fill="#ffffff"/><rect x="1727.15" y="556.3" width="5.5" height="5.4" fill="#00ff00"/><rect x="1735.96" y="535.2" width="5.5" height="5.2" fill="#00ff00"/><rect x="1735.96" y="542" width="5.5" height="12.3" fill="#ffffff"/><rect x="1735.96" y="556.3" width="5.5" height="5.4" fill="#00ff00"/><rect x="1744.77" y="535.2" width="5.5" height="5.2" fill="#00ff00"/><rect x="1744.77" y="542" width="5.5" height="12.3" fill="#ffffff"/><rect x="1744.77" y="556.3" width="5.5" height="5.4" fill="#00ff00"/><rect x="1753.58" y="535.2" width="5.5" height="5.2" fill="#00ff00"/><rect x="1753.58" y="542" width="5.5" height="12.3" fill="#ffffff"/><rect x="1753.58" y="556.3" width="5.5" height="5.4" fill="#00ff00"/><rect x="1762.39" y="535.2" width="5.5" height="5.2" fill="#00ff00"/><rect x="1762.39" y="542" width="5.5" height="12.3" fill="#ffffff"/><rect x="1762.39" y="556.3" width="5.5" height="5.4" fill="#00ff00"/><rect x="1771.2" y="535.2" width="5.5" height="5.2" fill="#00ff00"/><rect x="1771.2" y="542" width="5.5" height="12.3" fill="#ffffff"/><rect x="1771.2" y="556.3" width="5.5" height="5.4" fill="#00ff00"/><rect x="1780.01" y="535.2" width="5.5" height="5.2" fill="#00ff00"/><rect x="1780.01" y="542" width="5.5" height="12.3" fill="#ffffff"/><rect x="1780.01" y="556.3" width="5.5" height="5.4" fill="#00ff00"/><rect x="1788.82" y="535.2" width="5.5" height="5.2" fill="#00ff00"/><rect x="1788.82" y="542" width="5.5" height="12.3" fill="#ffffff"/><rect x="1788.82" y="556.3" width="5.5" height="5.4" fill="#00ff00"/><rect x="1797.63" y="535.2" width="5.5" height="5.2" fill="#00ff00"/><rect x="1797.63" y="542" width="5.5" height="12.3" fill="#ffffff"/><rect x="1797.63" y="556.3" width="5.5" height="5.4" fill="#00ff00"/><rect x="1806.44" y="535.2" width="5.5" height="5.2" fill="#00ff00"/><rect x="1806.44" y="542" width="5.5" height="12.3" fill="#ffffff"/><rect x="1806.44" y="556.3" width="5.5" height="5.4" fill="#00ff00"/><rect x="1815.25" y="535.2" width="5.5" height="5.2" fill="#00ff00"/><rect x="1815.25" y="542" width="5.5" height="12.3" fill="#ffffff"/><rect x="1815.25" y="556.3" width="5.5" height="5.4" fill="#00ff00"/><rect x="1824.06" y="535.2" width="5.5" height="5.2" fill="#00ff00"/><rect x="1824.06" y="542" width="5.5" height="12.3" fill="#ffffff"/><rect x="1824.06" y="556.3" width="5.5" height="5.4" fill="#00ff00"/><rect x="1832.87" y="535.2" width="5.5" height="5.2" fill="#00ff00"/><rect x="1832.87" y="542" width="5.5" height="12.3" fill="#ffffff"/><rect x="1832.87" y="556.3" width="5.5" height="5.4" fill="#00ff00"/><rect x="1843.48" y="535.2" width="5.5" height="5.2" fill="#00ff00"/><rect x="1843.48" y="542" width="5.5" height="12.3" fill="#ffffff"/><rect x="1843.48" y="556.3" width="5.5" height="5.4" fill="#00ff00"/><rect x="1852.29" y="535.2" width="5.5" height="5.2" fill="#00ff00"/><rect x="1852.29" y="542" width="5.5" height="12.3" fill="#ffffff"/><rect x="1852.29" y="556.3" width="5.5" height="5.4" fill="#00ff00"/><rect x="1861.1" y="535.2" width="5.5" height="5.2" fill="#00ff00"/><rect x="1861.1" y="542" width="5.5" height="12.3" fill="#ffffff"/><rect x="1861.1" y="556.3" width="5.5" height="5.4" fill="#00ff00"/><rect x="1869.91" y="535.2" width="5.5" height="5.2" fill="#00ff00"/><rect x="1869.91" y="542" width="5.5" height="12.3" fill="#ffffff"/><rect x="1869.91" y="556.3" width="5.5" height="5.4" fill="#00ff00"/><rect x="1878.72" y="535.2" width="5.5" height="5.2" fill="#00ff00"/><rect x="1878.72" y="542" width="5.5" height="12.3" fill="#ffffff"/><rect x="1878.72" y="556.3" width="5.5" height="5.4" fill="#00ff00"/><rect x="1887.53" y="535.2" width="5.5" height="5.2" fill="#00ff00"/><rect x="1887.53" y="542" width="5.5" height="12.3" fill="#ffffff"/><rect x="1887.53" y="556.3" width="5.5" height="5.4" fill="#00ff00"/><rect x="1898.14" y="535.2" width="5.5" height="5.2" fill="#00ff00"/><rect x="1898.14" y="542" width="5.5" height="12.3" fill="#ffffff"/><rect x="1898.14" y="556.3" width="5.5" height="5.4" fill="#00ff00"/><rect x="1906.95" y="535.2" width="5.5" height="5.2" fill="#00ff00"/><rect x="1906.95" y="542" width="5.5" height="12.3" fill="#ffffff"/><rect x="1906.95" y="556.3" width="5.5" height="5.4" fill="#00ff00"/><rect x="1915.76" y="535.2" width="5.5" height="5.2" fill="#00ff00"/><rect x="1915.76" y="542" width="5.5" height="12.3" fill="#ffffff"/><rect x="1915.76" y="556.3" width="5.5" height="5.4" fill="#00ff00"/><rect x="1924.57" y="535.2" width="5.5" height="5.2" fill="#00ff00"/><rect x="1924.57" y="542" width="5.5" height="12.3" fill="#ffffff"/><rect x="1924.57" y="556.3" width="5.5" height="5.4" fill="#00ff00"/><rect x="1933.38" y="535.2" width="5.5" height="5.2" fill="#00ff00"/><rect x="1933.38" y="542" width="5.5" height="12.3" fill="#ffffff"/><rect x="1933.38" y="556.3" width="5.5" height="5.4" fill="#00ff00"/><rect x="1943.6" y="535.4" width="1.2" height="25.8" fill="#c80000"/><rect x="307.6" y="494.9" width="9.7" height="5" fill="#00ff00"/><rect x="307.6" y="502.1" width="9.7" height="11.9" fill="#ff0000"/><rect x="307.6" y="516" width="9.7" height="5.2" fill="#00ff00"/><rect x="323" y="494.9" width="10" height="5" fill="#00ff00"/><rect x="323" y="502.1" width="10" height="11.9" fill="#ff0000"/><rect x="323" y="516" width="10" height="5.2" fill="#00ff00"/><rect x="741.2" y="494.9" width="10.9" height="5" fill="#00ff00"/><rect x="741.2" y="502.1" width="10.9" height="11.9" fill="#00ff00"/><rect x="741.2" y="516" width="10.9" height="5.2" fill="#00ff00"/><rect x="1573.7" y="494.9" width="11.4" height="5" fill="#00ff00"/><rect x="1573.7" y="502.1" width="11.4" height="11.9" fill="#ffffff"/><rect x="1573.7" y="516" width="11.4" height="5.2" fill="#00ff00"/><rect x="1157.8" y="488.2" width="10.2" height="39" fill="#a83c3c"/><rect x="1159.3" y="494.4" width="8.7" height="5.5" fill="#a8a83c"/><rect x="1159.3" y="501.9" width="8.7" height="12.4" fill="#a83ca8"/><rect x="1159.3" y="516" width="8.7" height="5.2" fill="#a8a83c"/><rect x="162.3" y="413.4" width="6.7" height="26.6" fill="#00ff00"/><rect x="171.2" y="413.4" width="4.5" height="26.6" fill="#00ff00"/><rect x="178.7" y="413.4" width="1.5" height="26.6" fill="#00ff00"/><rect x="183.7" y="413.4" width="4.4" height="26.6" fill="#00ff00"/><rect x="191.9" y="413.4" width="1.5" height="26.6" fill="#00ff00"/><rect x="197" y="413.4" width="1.3" height="26.6" fill="#00ff00"/><rect x="224.7" y="413.4" width="5.4" height="26.6" fill="#00ff00"/><rect x="236.6" y="413.4" width="2.2" height="26.6" fill="#00ff00"/><rect x="243" y="413.4" width="3.8" height="26.6" fill="#00ff00"/><rect x="251.7" y="413.4" width="5" height="26.6" fill="#00ff00"/><rect x="258.9" y="413.4" width="36.1" height="26.6" fill="#00ff00"/><rect x="297.7" y="413.4" width="4" height="26.6" fill="#00ff00"/><rect x="212.5" y="413.4" width="8.9" height="26.6" fill="#ffff00"/><rect x="321.8" y="413.4" width="10.7" height="26.6" fill="#ffff00"/><rect x="740.2" y="413.4" width="11.9" height="26.6" fill="#ffff00"/><rect x="1159.6" y="413.4" width="8.2" height="26.6" fill="#ffff00"/><rect x="1572.7" y="413.4" width="11.9" height="26.6" fill="#ffff00"/><rect x="1586.6" y="413.4" width="13.4" height="26.6" fill="#00ff00"/><rect x="334.7" y="413.4" width="3.5" height="26.6" fill="#00ff00"/><rect x="343.71" y="413.4" width="3.5" height="26.6" fill="#00ff00"/><rect x="352.72" y="413.4" width="3.5" height="26.6" fill="#00ff00"/><rect x="361.73" y="413.4" width="3.5" height="26.6" fill="#00ff00"/><rect x="370.74" y="413.4" width="3.5" height="26.6" fill="#00ff00"/><rect x="379.76" y="413.4" width="5.6" height="26.6" fill="#00ff00"/><rect x="388.77" y="413.4" width="4.2" height="26.6" fill="#00ff00"/><rect x="397.78" y="413.4" width="5.6" height="26.6" fill="#00ff00"/><rect x="406.79" y="413.4" width="3.2" height="26.6" fill="#00ff00"/><rect x="415.8" y="413.4" width="6" height="26.6" fill="#00ff00"/><rect x="424.81" y="413.4" width="6" height="26.6" fill="#00ff00"/><rect x="433.82" y="413.4" width="6" height="26.6" fill="#00ff00"/><rect x="442.83" y="413.4" width="6" height="26.6" fill="#00ff00"/><rect x="451.84" y="413.4" width="6" height="26.6" fill="#00ff00"/><rect x="460.85" y="413.4" width="6" height="26.6" fill="#00ff00"/><rect x="469.87" y="413.4" width="6" height="26.6" fill="#00ff00"/><rect x="478.88" y="413.4" width="6" height="26.6" fill="#00ff00"/><rect x="487.89" y="413.4" width="6" height="26.6" fill="#00ff00"/><rect x="496.9" y="413.4" width="6" height="26.6" fill="#00ff00"/><rect x="505.91" y="413.4" width="6" height="26.6" fill="#00ff00"/><rect x="514.92" y="413.4" width="6" height="26.6" fill="#00ff00"/><rect x="523.93" y="413.4" width="6" height="26.6" fill="#00ff00"/><rect x="532.94" y="413.4" width="3.1" height="26.6" fill="#00ff00"/><rect x="541.95" y="413.4" width="3.1" height="26.6" fill="#00ff00"/><rect x="550.96" y="413.4" width="3.1" height="26.6" fill="#00ff00"/><rect x="559.98" y="413.4" width="3.1" height="26.6" fill="#00ff00"/><rect x="568.99" y="413.4" width="6" height="26.6" fill="#00ff00"/><rect x="578" y="413.4" width="6" height="26.6" fill="#00ff00"/><rect x="587.01" y="413.4" width="6" height="26.6" fill="#00ff00"/><rect x="596.02" y="413.4" width="6" height="26.6" fill="#00ff00"/><rect x="605.03" y="413.4" width="6" height="26.6" fill="#00ff00"/><rect x="614.04" y="413.4" width="6" height="26.6" fill="#00ff00"/><rect x="623.05" y="413.4" width="6" height="26.6" fill="#00ff00"/><rect x="632.06" y="413.4" width="6" height="26.6" fill="#00ff00"/><rect x="641.07" y="413.4" width="6" height="26.6" fill="#00ff00"/><rect x="650.08" y="413.4" width="6" height="26.6" fill="#00ff00"/><rect x="659.1" y="413.4" width="6" height="26.6" fill="#00ff00"/><rect x="668.11" y="413.4" width="6" height="26.6" fill="#00ff00"/><rect x="677.12" y="413.4" width="6" height="26.6" fill="#00ff00"/><rect x="686.13" y="413.4" width="6" height="26.6" fill="#00ff00"/><rect x="695.14" y="413.4" width="6" height="26.6" fill="#00ff00"/><rect x="704.15" y="413.4" width="6" height="26.6" fill="#00ff00"/><rect x="713.16" y="413.4" width="6" height="26.6" fill="#00ff00"/><rect x="722.17" y="413.4" width="6" height="26.6" fill="#00ff00"/><rect x="731.18" y="413.4" width="6" height="26.6" fill="#00ff00"/><rect x="754.1" y="413.4" width="6" height="26.6" fill="#00ff00"/><rect x="763.05" y="413.4" width="6" height="26.6" fill="#00ff00"/><rect x="772" y="413.4" width="6" height="26.6" fill="#00ff00"/><rect x="780.95" y="413.4" width="6" height="26.6" fill="#00ff00"/><rect x="789.9" y="413.4" width="6" height="26.6" fill="#00ff00"/><rect x="798.85" y="413.4" width="6" height="26.6" fill="#00ff00"/><rect x="807.8" y="413.4" width="6" height="26.6" fill="#00ff00"/><rect x="816.75" y="413.4" width="6" height="26.6" fill="#00ff00"/><rect x="825.7" y="413.4" width="6" height="26.6" fill="#00ff00"/><rect x="834.65" y="413.4" width="6" height="26.6" fill="#00ff00"/><rect x="843.6" y="413.4" width="6" height="26.6" fill="#00ff00"/><rect x="852.55" y="413.4" width="6" height="26.6" fill="#00ff00"/><rect x="861.5" y="413.4" width="6" height="26.6" fill="#00ff00"/><rect x="870.45" y="413.4" width="6" height="26.6" fill="#00ff00"/><rect x="879.4" y="413.4" width="6" height="26.6" fill="#00ff00"/><rect x="888.35" y="413.4" width="6" height="26.6" fill="#00ff00"/><rect x="897.3" y="413.4" width="6" height="26.6" fill="#00ff00"/><rect x="906.25" y="413.4" width="6" height="26.6" fill="#00ff00"/><rect x="915.2" y="413.4" width="6" height="26.6" fill="#00ff00"/><rect x="924.15" y="413.4" width="6" height="26.6" fill="#00ff00"/><rect x="933.1" y="413.4" width="6" height="26.6" fill="#00ff00"/><rect x="942.05" y="413.4" width="6" height="26.6" fill="#00ff00"/><rect x="951" y="413.4" width="6" height="26.6" fill="#00ff00"/><rect x="959.95" y="413.4" width="6" height="26.6" fill="#00ff00"/><rect x="968.9" y="413.4" width="6" height="26.6" fill="#00ff00"/><rect x="977.85" y="413.4" width="6" height="26.6" fill="#00ff00"/><rect x="986.8" y="413.4" width="6" height="26.6" fill="#00ff00"/><rect x="995.75" y="413.4" width="6" height="26.6" fill="#00ff00"/><rect x="1004.7" y="413.4" width="6" height="26.6" fill="#00ff00"/><rect x="1013.65" y="413.4" width="6" height="26.6" fill="#00ff00"/><rect x="1022.6" y="413.4" width="6" height="26.6" fill="#00ff00"/><rect x="1031.55" y="413.4" width="6" height="26.6" fill="#00ff00"/><rect x="1040.5" y="413.4" width="6" height="26.6" fill="#00ff00"/><rect x="1049.45" y="413.4" width="6" height="26.6" fill="#00ff00"/><rect x="1058.4" y="413.4" width="6" height="26.6" fill="#00ff00"/><rect x="1067.35" y="413.4" width="6" height="26.6" fill="#00ff00"/><rect x="1076.3" y="413.4" width="6" height="26.6" fill="#00ff00"/><rect x="1085.25" y="413.4" width="6" height="26.6" fill="#00ff00"/><rect x="1094.2" y="413.4" width="6" height="26.6" fill="#00ff00"/><rect x="1103.15" y="413.4" width="6" height="26.6" fill="#00ff00"/><rect x="1112.1" y="413.4" width="6" height="26.6" fill="#00ff00"/><rect x="1121.05" y="413.4" width="6" height="26.6" fill="#00ff00"/><rect x="1130" y="413.4" width="6" height="26.6" fill="#00ff00"/><rect x="1138.95" y="413.4" width="6" height="26.6" fill="#00ff00"/><rect x="1147.9" y="413.4" width="6" height="26.6" fill="#00ff00"/><rect x="1170" y="413.4" width="6" height="26.6" fill="#00ff00"/><rect x="1178.83" y="413.4" width="6" height="26.6" fill="#00ff00"/><rect x="1187.66" y="413.4" width="6" height="26.6" fill="#00ff00"/><rect x="1196.49" y="413.4" width="6" height="26.6" fill="#00ff00"/><rect x="1205.32" y="413.4" width="6" height="26.6" fill="#00ff00"/><rect x="1214.15" y="413.4" width="6" height="26.6" fill="#00ff00"/><rect x="1222.98" y="413.4" width="6" height="26.6" fill="#00ff00"/><rect x="1231.81" y="413.4" width="6" height="26.6" fill="#00ff00"/><rect x="1240.64" y="413.4" width="6" height="26.6" fill="#00ff00"/><rect x="1249.47" y="413.4" width="6" height="26.6" fill="#00ff00"/><rect x="1258.3" y="413.4" width="6" height="26.6" fill="#00ff00"/><rect x="1267.13" y="413.4" width="6" height="26.6" fill="#00ff00"/><rect x="1275.96" y="413.4" width="6" height="26.6" fill="#00ff00"/><rect x="1284.79" y="413.4" width="6" height="26.6" fill="#00ff00"/><rect x="1293.62" y="413.4" width="6" height="26.6" fill="#00ff00"/><rect x="1302.45" y="413.4" width="6" height="26.6" fill="#00ff00"/><rect x="1311.28" y="413.4" width="6" height="26.6" fill="#00ff00"/><rect x="1320.11" y="413.4" width="6" height="26.6" fill="#00ff00"/><rect x="1328.94" y="413.4" width="6" height="26.6" fill="#00ff00"/><rect x="1337.77" y="413.4" width="6" height="26.6" fill="#00ff00"/><rect x="1346.6" y="413.4" width="6" height="26.6" fill="#00ff00"/><rect x="1355.43" y="413.4" width="6" height="26.6" fill="#00ff00"/><rect x="1364.26" y="413.4" width="6" height="26.6" fill="#00ff00"/><rect x="1373.09" y="413.4" width="6" height="26.6" fill="#00ff00"/><rect x="1381.92" y="413.4" width="6" height="26.6" fill="#00ff00"/><rect x="1393.6" y="413.4" width="6" height="26.6" fill="#00ff00"/><rect x="1402.51" y="413.4" width="6" height="26.6" fill="#00ff00"/><rect x="1411.42" y="413.4" width="6" height="26.6" fill="#00ff00"/><rect x="1420.33" y="413.4" width="6" height="26.6" fill="#00ff00"/><rect x="1429.24" y="413.4" width="6" height="26.6" fill="#00ff00"/><rect x="1438.15" y="413.4" width="6" height="26.6" fill="#00ff00"/><rect x="1447.06" y="413.4" width="6" height="26.6" fill="#00ff00"/><rect x="1455.97" y="413.4" width="6" height="26.6" fill="#00ff00"/><rect x="1464.88" y="413.4" width="6" height="26.6" fill="#00ff00"/><rect x="1473.79" y="413.4" width="6" height="26.6" fill="#00ff00"/><rect x="1482.7" y="413.4" width="6" height="26.6" fill="#00ff00"/><rect x="1491.61" y="413.4" width="6" height="26.6" fill="#00ff00"/><rect x="1500.52" y="413.4" width="6" height="26.6" fill="#00ff00"/><rect x="1509.43" y="413.4" width="6" height="26.6" fill="#00ff00"/><rect x="1518.34" y="413.4" width="6" height="26.6" fill="#00ff00"/><rect x="1527.25" y="413.4" width="6" height="26.6" fill="#00ff00"/><rect x="1536.16" y="413.4" width="6" height="26.6" fill="#00ff00"/><rect x="1545.07" y="413.4" width="6" height="26.6" fill="#00ff00"/><rect x="1553.98" y="413.4" width="6" height="26.6" fill="#00ff00"/><rect x="1562.89" y="413.4" width="6" height="26.6" fill="#00ff00"/><rect x="1603.81" y="413.4" width="6" height="26.6" fill="#00ff00"/><rect x="1612.62" y="413.4" width="6" height="26.6" fill="#00ff00"/><rect x="1621.43" y="413.4" width="6" height="26.6" fill="#00ff00"/><rect x="1630.24" y="413.4" width="6" height="26.6" fill="#00ff00"/><rect x="1639.05" y="413.4" width="6" height="26.6" fill="#00ff00"/><rect x="1647.86" y="413.4" width="6" height="26.6" fill="#00ff00"/><rect x="1656.67" y="413.4" width="6" height="26.6" fill="#00ff00"/><rect x="1665.48" y="413.4" width="6" height="26.6" fill="#00ff00"/><rect x="1674.29" y="413.4" width="6" height="26.6" fill="#00ff00"/><rect x="1683.1" y="413.4" width="6" height="26.6" fill="#00ff00"/><rect x="1691.91" y="413.4" width="6" height="26.6" fill="#00ff00"/><rect x="1700.72" y="413.4" width="6" height="26.6" fill="#00ff00"/><rect x="1709.53" y="413.4" width="6" height="26.6" fill="#00ff00"/><rect x="1718.34" y="413.4" width="6" height="26.6" fill="#00ff00"/><rect x="1727.15" y="413.4" width="6" height="26.6" fill="#00ff00"/><rect x="1735.96" y="413.4" width="6" height="26.6" fill="#00ff00"/><rect x="1744.77" y="413.4" width="6" height="26.6" fill="#00ff00"/><rect x="1753.58" y="413.4" width="6" height="26.6" fill="#00ff00"/><rect x="1762.39" y="413.4" width="6" height="26.6" fill="#00ff00"/><rect x="1771.2" y="413.4" width="6" height="26.6" fill="#00ff00"/><rect x="1780.01" y="413.4" width="6" height="26.6" fill="#00ff00"/><rect x="1788.82" y="413.4" width="6" height="26.6" fill="#00ff00"/><rect x="1797.63" y="413.4" width="6" height="26.6" fill="#00ff00"/><rect x="1806.44" y="413.4" width="6" height="26.6" fill="#00ff00"/><rect x="1815.25" y="413.4" width="6" height="26.6" fill="#00ff00"/><rect x="1824.06" y="413.4" width="6" height="26.6" fill="#00ff00"/><rect x="1832.87" y="413.4" width="6" height="26.6" fill="#00ff00"/><rect x="1843.48" y="413.4" width="6" height="26.6" fill="#00ff00"/><rect x="1852.29" y="413.4" width="6" height="26.6" fill="#00ff00"/><rect x="1861.1" y="413.4" width="6" height="26.6" fill="#00ff00"/><rect x="1869.91" y="413.4" width="6" height="26.6" fill="#00ff00"/><rect x="1878.72" y="413.4" width="6" height="26.6" fill="#00ff00"/><rect x="1887.53" y="413.4" width="6" height="26.6" fill="#00ff00"/><rect x="1898.14" y="413.4" width="6" height="26.6" fill="#00ff00"/><rect x="1906.95" y="413.4" width="2.6" height="26.6" fill="#00ff00"/><rect x="1915.76" y="413.4" width="2.6" height="26.6" fill="#00ff00"/><rect x="1924.57" y="413.4" width="2.6" height="26.6" fill="#00ff00"/><rect x="1933.38" y="413.4" width="2.6" height="26.6" fill="#00ff00"/><rect x="1389.9" y="413.4" width="8.9" height="26.6" fill="#00ff00"/><rect x="1942.4" y="413.4" width="2.4" height="26.6" fill="#00ff00"/></g>
<line x1="131" y1="262.8" x2="131" y2="589" stroke="#fff" stroke-width="2"/>
<line x1="130" y1="588" x2="1945" y2="588" stroke="#fff" stroke-width="2"/>
<line x1="131" y1="304.5" x2="141.5" y2="304.5" stroke="#fff" stroke-width="2"/><line x1="131" y1="345.5" x2="141.5" y2="345.5" stroke="#fff" stroke-width="2"/><line x1="131" y1="385" x2="141.5" y2="385" stroke="#fff" stroke-width="2"/><line x1="131" y1="426.2" x2="141.5" y2="426.2" stroke="#fff" stroke-width="2"/><line x1="131" y1="467" x2="141.5" y2="467" stroke="#fff" stroke-width="2"/><line x1="131" y1="507.6" x2="141.5" y2="507.6" stroke="#fff" stroke-width="2"/><line x1="131" y1="547.1" x2="141.5" y2="547.1" stroke="#fff" stroke-width="2"/><line x1="134.75" y1="583" x2="134.75" y2="588" stroke="#fff" stroke-width="2"/><line x1="187.53" y1="583" x2="187.53" y2="588" stroke="#fff" stroke-width="2"/><line x1="240.3" y1="577" x2="240.3" y2="588" stroke="#fff" stroke-width="2"/><line x1="293.46" y1="583" x2="293.46" y2="588" stroke="#fff" stroke-width="2"/><line x1="346.62" y1="583" x2="346.62" y2="588" stroke="#fff" stroke-width="2"/><line x1="399.78" y1="583" x2="399.78" y2="588" stroke="#fff" stroke-width="2"/><line x1="452.94" y1="583" x2="452.94" y2="588" stroke="#fff" stroke-width="2"/><line x1="506.1" y1="577" x2="506.1" y2="588" stroke="#fff" stroke-width="2"/><line x1="559.22" y1="583" x2="559.22" y2="588" stroke="#fff" stroke-width="2"/><line x1="612.34" y1="583" x2="612.34" y2="588" stroke="#fff" stroke-width="2"/><line x1="665.46" y1="583" x2="665.46" y2="588" stroke="#fff" stroke-width="2"/><line x1="718.58" y1="583" x2="718.58" y2="588" stroke="#fff" stroke-width="2"/><line x1="771.7" y1="577" x2="771.7" y2="588" stroke="#fff" stroke-width="2"/><line x1="824.38" y1="583" x2="824.38" y2="588" stroke="#fff" stroke-width="2"/><line x1="877.06" y1="583" x2="877.06" y2="588" stroke="#fff" stroke-width="2"/><line x1="929.74" y1="583" x2="929.74" y2="588" stroke="#fff" stroke-width="2"/><line x1="982.42" y1="583" x2="982.42" y2="588" stroke="#fff" stroke-width="2"/><line x1="1035.1" y1="577" x2="1035.1" y2="588" stroke="#fff" stroke-width="2"/><line x1="1088.22" y1="583" x2="1088.22" y2="588" stroke="#fff" stroke-width="2"/><line x1="1141.34" y1="583" x2="1141.34" y2="588" stroke="#fff" stroke-width="2"/><line x1="1194.46" y1="583" x2="1194.46" y2="588" stroke="#fff" stroke-width="2"/><line x1="1247.58" y1="583" x2="1247.58" y2="588" stroke="#fff" stroke-width="2"/><line x1="1300.7" y1="577" x2="1300.7" y2="588" stroke="#fff" stroke-width="2"/><line x1="1353.82" y1="583" x2="1353.82" y2="588" stroke="#fff" stroke-width="2"/><line x1="1406.94" y1="583" x2="1406.94" y2="588" stroke="#fff" stroke-width="2"/><line x1="1460.06" y1="583" x2="1460.06" y2="588" stroke="#fff" stroke-width="2"/><line x1="1513.18" y1="583" x2="1513.18" y2="588" stroke="#fff" stroke-width="2"/><line x1="1566.3" y1="577" x2="1566.3" y2="588" stroke="#fff" stroke-width="2"/><line x1="1619.04" y1="583" x2="1619.04" y2="588" stroke="#fff" stroke-width="2"/><line x1="1671.78" y1="583" x2="1671.78" y2="588" stroke="#fff" stroke-width="2"/><line x1="1724.52" y1="583" x2="1724.52" y2="588" stroke="#fff" stroke-width="2"/><line x1="1777.26" y1="583" x2="1777.26" y2="588" stroke="#fff" stroke-width="2"/><line x1="1830" y1="577" x2="1830" y2="588" stroke="#fff" stroke-width="2"/><line x1="1882.65" y1="583" x2="1882.65" y2="588" stroke="#fff" stroke-width="2"/><line x1="1935.3" y1="583" x2="1935.3" y2="588" stroke="#fff" stroke-width="2"/>
<line x1="1159.1" y1="263" x2="1159.1" y2="588" stroke="#828282" stroke-width="2"/>
</svg>
<svg width="2000" height="1974" viewBox="0 0 2000 1974">
<text x="119.4" y="313.8" font-size="25" fill="#fff" text-anchor="end" letter-spacing="0.8">Job</text>
<text x="119.4" y="354.8" font-size="25" fill="#fff" text-anchor="end" letter-spacing="0.8">Mount</text>
<text x="119.4" y="394.3" font-size="25" fill="#fff" text-anchor="end" letter-spacing="0.8">Flip</text>
<text x="119.4" y="435.5" font-size="25" fill="#fff" text-anchor="end" letter-spacing="0.8">Guide</text>
<text x="119.4" y="476.3" font-size="25" fill="#fff" text-anchor="end" letter-spacing="0.8">Align</text>
<text x="119.4" y="516.9" font-size="25" fill="#fff" text-anchor="end" letter-spacing="0.8">Focus</text>
<text x="119.4" y="556.4" font-size="25" fill="#fff" text-anchor="end" letter-spacing="0.8">Capture</text>
<text transform="translate(240.3,617.6) scale(1.1,1)" x="0.38" y="0" font-size="23" fill="#fff" text-anchor="middle" letter-spacing="0.75">2500</text>
<text transform="translate(506.1,617.6) scale(1.1,1)" x="0.38" y="0" font-size="23" fill="#fff" text-anchor="middle" letter-spacing="0.75">5000</text>
<text transform="translate(771.7,617.6) scale(1.1,1)" x="0.38" y="0" font-size="23" fill="#fff" text-anchor="middle" letter-spacing="0.75">7500</text>
<text transform="translate(1035.1,617.6) scale(1.1,1)" x="0.12" y="0" font-size="23" fill="#fff" text-anchor="middle" letter-spacing="0.25">10000</text>
<text transform="translate(1300.7,617.6) scale(1.1,1)" x="0.12" y="0" font-size="23" fill="#fff" text-anchor="middle" letter-spacing="0.25">12500</text>
<text transform="translate(1566.3,617.6) scale(1.1,1)" x="0.12" y="0" font-size="23" fill="#fff" text-anchor="middle" letter-spacing="0.25">15000</text>
<text transform="translate(1830,617.6) scale(1.1,1)" x="0.12" y="0" font-size="23" fill="#fff" text-anchor="middle" letter-spacing="0.25">17500</text>
</svg>
<div class="cb" style="left:17.9px;top:647.3px"><svg width="26.5" height="26.5" viewBox="0 0 26.5 26.5" style="left:-2px;top:-2px"><path d="M5.2,13.6 L10.6,20.6 L21.6,4.8" fill="none" stroke="#232629" stroke-width="3.4" stroke-linejoin="miter"/></svg></div>
<div class="cb" style="left:47.3px;top:647.3px"><svg width="26.5" height="26.5" viewBox="0 0 26.5 26.5" style="left:-2px;top:-2px"><path d="M5.2,13.6 L10.6,20.6 L21.6,4.8" fill="none" stroke="#232629" stroke-width="3.4" stroke-linejoin="miter"/></svg></div>
<div style="position:absolute;top:650.64px;font-size:25px;line-height:25px;white-space:nowrap;color:#2a2e32;letter-spacing:0.7px;left:77px;">Statistics</div>
<div class="btn" style="left:766.4px;top:639.5px;width:154.9px;height:45.8px"></div>
<div class="box" style="left:924.4px;top:639.5px;width:154.9px;height:45.8px"></div>
<div class="box" style="left:1082.5px;top:639.5px;width:154.9px;height:45.8px"></div>
<div class="btn" style="left:1240.5px;top:639.5px;width:155.3px;height:45.8px"></div>
<div style="position:absolute;top:650.49px;font-size:26px;line-height:26px;white-space:nowrap;color:#2a2e32;left:843.8px;transform:translateX(-50%);">+</div>
<div style="position:absolute;top:649.61px;font-size:25.5px;line-height:25.5px;white-space:nowrap;color:#2a2e32;letter-spacing:0.25px;left:999.52px;transform:translateX(-50%);">11155.6s</div>
<div style="position:absolute;top:649.61px;font-size:25.5px;line-height:25.5px;white-space:nowrap;color:#2a2e32;letter-spacing:0.65px;left:1160.53px;transform:translateX(-50%);">01:26:56</div>
<div style="position:absolute;top:650.49px;font-size:26px;line-height:26px;white-space:nowrap;color:#2a2e32;left:1318.5px;transform:translateX(-50%);">-</div>
<svg width="2000" height="1974" viewBox="0 0 2000 1974" shape-rendering="crispEdges">
<rect x="17.5" y="688" width="1957.2" height="401.6" fill="#000"/>
<g shape-rendering="geometricPrecision"><line x1="145" y1="714.8" x2="1940.6" y2="714.8" stroke="#868686" stroke-width="1.7" stroke-dasharray="3.5 2.4"/><line x1="145" y1="769.5" x2="1940.6" y2="769.5" stroke="#868686" stroke-width="1.7" stroke-dasharray="3.5 2.4"/><line x1="145" y1="824" x2="1940.6" y2="824" stroke="#868686" stroke-width="1.7" stroke-dasharray="3.5 2.4"/><line x1="145" y1="878.8" x2="1940.6" y2="878.8" stroke="#868686" stroke-width="1.7" stroke-dasharray="3.5 2.4"/><line x1="145" y1="931.4" x2="1940.6" y2="931.4" stroke="#868686" stroke-width="1.7" stroke-dasharray="3.5 2.4"/><line x1="145" y1="986.3" x2="1940.6" y2="986.3" stroke="#868686" stroke-width="1.7" stroke-dasharray="3.5 2.4"/><line x1="359.3" y1="714.8" x2="359.3" y2="1041" stroke="#868686" stroke-width="1.7" stroke-dasharray="3.5 2.4"/><line x1="740.2" y1="714.8" x2="740.2" y2="1041" stroke="#868686" stroke-width="1.7" stroke-dasharray="3.5 2.4"/><line x1="1121" y1="714.8" x2="1121" y2="1041" stroke="#868686" stroke-width="1.7" stroke-dasharray="3.5 2.4"/><line x1="1501.9" y1="714.8" x2="1501.9" y2="1041" stroke="#868686" stroke-width="1.7" stroke-dasharray="3.5 2.4"/><line x1="1882.7" y1="714.8" x2="1882.7" y2="1041" stroke="#868686" stroke-width="1.7" stroke-dasharray="3.5 2.4"/></g>
</svg>
<svg width="2000" height="1974" viewBox="0 0 2000 1974">
<path d="M133.4,851.5 L300,852 L308.2,852 L308.2,759.5 L407.33,759.5 L407.33,765 L469.69,765 L469.69,770 L497.52,770 L497.52,776 L506.46,776 L506.46,770 L515.65,770 L515.65,776 L524.6,776 L524.6,781 L533.79,781 L533.79,776 L542.73,776 L542.73,781 L551.93,781 L551.93,786.5 L560.87,786.5 L560.87,792 L659.25,792 L659.25,781 L668.45,781 L668.45,776 L677.39,776 L677.39,781 L686.83,781 L686.83,776 L695.53,776 L695.53,781 L704.72,781 L704.72,776 L713.66,776 L713.66,781 L722.86,781 L722.86,786.5 L741.24,786.5 L741.24,917 L763.11,917 L763.11,922.5 L780,922.5 L844.29,922.5 L844.29,928 L871.12,928 L871.12,933.5 L897.95,933.5 L897.95,939 L906.89,939 L906.89,933.5 L916.09,933.5 L916.09,939 L925.53,939 L925.53,933.5 L934.47,933.5 L934.47,939 L996.58,939 L996.58,944 L1022.92,944 L1022.92,949.5 L1147.39,949.5 L1147.39,955 L1156.09,955 L1157.08,960.5 L1157.58,939 L1178.7,939 L1178.7,944 L1187.64,944 L1187.64,939 L1205.53,939 L1205.53,944 L1250,944 L1302.11,944 L1302.11,949.5 L1337.39,949.5 L1337.39,955 L1346.34,955 L1346.34,960.5 L1381.61,960.5 L1381.61,966 L1390.56,966 L1390.56,960.5 L1481.74,960.5 L1481.74,966 L1490.93,966 L1490.93,971.5 L1508.57,971.5 L1508.57,977 L1526.46,977 L1526.46,982 L1562.48,982 L1562.48,977 L1572.92,977 L1572.92,884.5 L1572.92,884.5 L1603.23,884.5 L1603.23,890 L1664.84,890 L1664.84,884.5 L1699.88,884.5 L1699.88,890 L1726.71,890 L1726.71,895.5 L1779.13,895.5 L1779.13,901 L1797.27,901 L1797.27,895.5 L1841.49,895.5 L1841.49,890 L1851.18,890 L1851.18,895.5 L1878.01,895.5 L1878.01,890 L1896.89,890 L1896.89,884.5 L1906.58,884.5 L1906.58,879 L1924.72,879 L1924.72,873.5 L1933.91,873.5 L1933.91,868 L1943.35,868 L1943.35,863.5 L1944.84,862" fill="none" stroke="#689f00" stroke-width="1.5" stroke-linejoin="round"/>
<rect x="159" y="744" width="129" height="33" fill="#000" opacity=".82"/>
<line x1="170" y1="768.6" x2="232.3" y2="768.6" stroke="#86d200" stroke-width="2"/>
<text x="246" y="759.2" font-size="12.4" fill="#fff" letter-spacing="-0.35">focus</text>
</svg>
<svg width="2000" height="1974" viewBox="0 0 2000 1974" shape-rendering="crispEdges">
<line x1="133.4" y1="713.8" x2="133.4" y2="1042" stroke="#fff" stroke-width="2"/>
<line x1="132.4" y1="1041" x2="1945" y2="1041" stroke="#fff" stroke-width="2"/>
<line x1="133.4" y1="714.8" x2="144.4" y2="714.8" stroke="#fff" stroke-width="2"/><line x1="133.4" y1="725.74" x2="138.9" y2="725.74" stroke="#fff" stroke-width="2"/><line x1="133.4" y1="736.68" x2="138.9" y2="736.68" stroke="#fff" stroke-width="2"/><line x1="133.4" y1="747.62" x2="138.9" y2="747.62" stroke="#fff" stroke-width="2"/><line x1="133.4" y1="758.56" x2="138.9" y2="758.56" stroke="#fff" stroke-width="2"/><line x1="133.4" y1="769.5" x2="144.4" y2="769.5" stroke="#fff" stroke-width="2"/><line x1="133.4" y1="780.4" x2="138.9" y2="780.4" stroke="#fff" stroke-width="2"/><line x1="133.4" y1="791.3" x2="138.9" y2="791.3" stroke="#fff" stroke-width="2"/><line x1="133.4" y1="802.2" x2="138.9" y2="802.2" stroke="#fff" stroke-width="2"/><line x1="133.4" y1="813.1" x2="138.9" y2="813.1" stroke="#fff" stroke-width="2"/><line x1="133.4" y1="824" x2="144.4" y2="824" stroke="#fff" stroke-width="2"/><line x1="133.4" y1="834.96" x2="138.9" y2="834.96" stroke="#fff" stroke-width="2"/><line x1="133.4" y1="845.92" x2="138.9" y2="845.92" stroke="#fff" stroke-width="2"/><line x1="133.4" y1="856.88" x2="138.9" y2="856.88" stroke="#fff" stroke-width="2"/><line x1="133.4" y1="867.84" x2="138.9" y2="867.84" stroke="#fff" stroke-width="2"/><line x1="133.4" y1="878.8" x2="144.4" y2="878.8" stroke="#fff" stroke-width="2"/><line x1="133.4" y1="889.32" x2="138.9" y2="889.32" stroke="#fff" stroke-width="2"/><line x1="133.4" y1="899.84" x2="138.9" y2="899.84" stroke="#fff" stroke-width="2"/><line x1="133.4" y1="910.36" x2="138.9" y2="910.36" stroke="#fff" stroke-width="2"/><line x1="133.4" y1="920.88" x2="138.9" y2="920.88" stroke="#fff" stroke-width="2"/><line x1="133.4" y1="931.4" x2="144.4" y2="931.4" stroke="#fff" stroke-width="2"/><line x1="133.4" y1="942.38" x2="138.9" y2="942.38" stroke="#fff" stroke-width="2"/><line x1="133.4" y1="953.36" x2="138.9" y2="953.36" stroke="#fff" stroke-width="2"/><line x1="133.4" y1="964.34" x2="138.9" y2="964.34" stroke="#fff" stroke-width="2"/><line x1="133.4" y1="975.32" x2="138.9" y2="975.32" stroke="#fff" stroke-width="2"/><line x1="133.4" y1="986.3" x2="144.4" y2="986.3" stroke="#fff" stroke-width="2"/><line x1="133.4" y1="997.24" x2="138.9" y2="997.24" stroke="#fff" stroke-width="2"/><line x1="133.4" y1="1008.18" x2="138.9" y2="1008.18" stroke="#fff" stroke-width="2"/><line x1="133.4" y1="1019.12" x2="138.9" y2="1019.12" stroke="#fff" stroke-width="2"/><line x1="133.4" y1="1030.06" x2="138.9" y2="1030.06" stroke="#fff" stroke-width="2"/><line x1="133.4" y1="1041" x2="142.4" y2="1041" stroke="#fff" stroke-width="2"/><line x1="168.86" y1="1036" x2="168.86" y2="1041" stroke="#fff" stroke-width="2"/><line x1="264.08" y1="1036" x2="264.08" y2="1041" stroke="#fff" stroke-width="2"/><line x1="359.3" y1="1030" x2="359.3" y2="1041" stroke="#fff" stroke-width="2"/><line x1="454.52" y1="1036" x2="454.52" y2="1041" stroke="#fff" stroke-width="2"/><line x1="549.74" y1="1036" x2="549.74" y2="1041" stroke="#fff" stroke-width="2"/><line x1="644.96" y1="1036" x2="644.96" y2="1041" stroke="#fff" stroke-width="2"/><line x1="740.18" y1="1030" x2="740.18" y2="1041" stroke="#fff" stroke-width="2"/><line x1="835.4" y1="1036" x2="835.4" y2="1041" stroke="#fff" stroke-width="2"/><line x1="930.62" y1="1036" x2="930.62" y2="1041" stroke="#fff" stroke-width="2"/><line x1="1025.84" y1="1036" x2="1025.84" y2="1041" stroke="#fff" stroke-width="2"/><line x1="1121.06" y1="1030" x2="1121.06" y2="1041" stroke="#fff" stroke-width="2"/><line x1="1216.28" y1="1036" x2="1216.28" y2="1041" stroke="#fff" stroke-width="2"/><line x1="1311.5" y1="1036" x2="1311.5" y2="1041" stroke="#fff" stroke-width="2"/><line x1="1406.72" y1="1036" x2="1406.72" y2="1041" stroke="#fff" stroke-width="2"/><line x1="1501.94" y1="1030" x2="1501.94" y2="1041" stroke="#fff" stroke-width="2"/><line x1="1597.16" y1="1036" x2="1597.16" y2="1041" stroke="#fff" stroke-width="2"/><line x1="1692.38" y1="1036" x2="1692.38" y2="1041" stroke="#fff" stroke-width="2"/><line x1="1787.6" y1="1036" x2="1787.6" y2="1041" stroke="#fff" stroke-width="2"/><line x1="1882.82" y1="1030" x2="1882.82" y2="1041" stroke="#fff" stroke-width="2"/>
<line x1="1160.1" y1="714.8" x2="1160.1" y2="1041" stroke="#828282" stroke-width="2"/>
</svg>
<svg width="2000" height="1974" viewBox="0 0 2000 1974">
<text transform="translate(120.5,721.5) scale(1.1,1)" x="0.3" y="0" font-size="18.8" fill="#fff" text-anchor="end" letter-spacing="0.3">18040</text>
<text transform="translate(120.5,776.2) scale(1.1,1)" x="0.3" y="0" font-size="18.8" fill="#fff" text-anchor="end" letter-spacing="0.3">18030</text>
<text transform="translate(120.5,830.7) scale(1.1,1)" x="0.3" y="0" font-size="18.8" fill="#fff" text-anchor="end" letter-spacing="0.3">18020</text>
<text transform="translate(120.5,885.5) scale(1.1,1)" x="0.3" y="0" font-size="18.8" fill="#fff" text-anchor="end" letter-spacing="0.3">18010</text>
<text transform="translate(120.5,938.1) scale(1.1,1)" x="0.3" y="0" font-size="18.8" fill="#fff" text-anchor="end" letter-spacing="0.3">18000</text>
<text transform="translate(120.5,993) scale(1.1,1)" x="0.3" y="0" font-size="18.8" fill="#fff" text-anchor="end" letter-spacing="0.3">17990</text>
<text transform="translate(120.5,1047.7) scale(1.1,1)" x="0.3" y="0" font-size="18.8" fill="#fff" text-anchor="end" letter-spacing="0.3">17980</text>
<text transform="translate(359.3,1070.7) scale(1.05,1)" x="0.07" y="0" font-size="23" fill="#fff" text-anchor="middle" letter-spacing="0.15">23:21:01</text>
<text transform="translate(740.2,1070.7) scale(1.05,1)" x="0.07" y="0" font-size="23" fill="#fff" text-anchor="middle" letter-spacing="0.15">00:21:01</text>
<text transform="translate(1121,1070.7) scale(1.05,1)" x="0.07" y="0" font-size="23" fill="#fff" text-anchor="middle" letter-spacing="0.15">01:21:01</text>
<text transform="translate(1501.9,1070.7) scale(1.05,1)" x="0.07" y="0" font-size="23" fill="#fff" text-anchor="middle" letter-spacing="0.15">02:21:01</text>
<text transform="translate(1882.7,1070.7) scale(1.05,1)" x="0.07" y="0" font-size="23" fill="#fff" text-anchor="middle" letter-spacing="0.15">03:21:01</text>
<text transform="translate(38.3,877.5) rotate(-90)" font-size="18.5" fill="#fff" text-anchor="middle" letter-spacing="0.6">focus</text>
</svg>
<div style="position:absolute;left:17.5px;top:1091.8px;width:1957.2px;height:27.1px;background:linear-gradient(#f4f4f4,#fdfdfd 30%,#fbfbfb)"></div>
<div style="position:absolute;left:42.2px;top:1091.8px;width:391.3px;height:27.1px;background:#e6e6e6;border-left:1.5px solid #c4c4c4;border-right:1.5px solid #c4c4c4;box-sizing:border-box"></div>
<div style="position:absolute;left:1102px;top:1091.8px;width:845.6px;height:27.1px;background:#e6e6e6;border-left:1.5px solid #c4c4c4;border-right:1.5px solid #c4c4c4;box-sizing:border-box"></div>
<svg width="2000" height="1974" viewBox="0 0 2000 1974"><path d="M33.2,1097.9 v15.4 l-7.7,-7.7 z" fill="#6f7274"/><path d="M1957.3,1097.9 v15.4 l7.7,-7.7 z" fill="#6f7274"/></svg>
<div style="position:absolute;top:1137.57px;font-size:20px;line-height:20px;white-space:nowrap;color:#2a2e32;letter-spacing:0.6px;left:35.7px;">Guide</div>
<div class="cb" style="left:125.3px;top:1131.4px"></div>
<div style="position:absolute;top:1137.46px;font-size:18px;line-height:18px;white-space:nowrap;color:#2a2e32;letter-spacing:0.8px;left:162.3px;"><u>r</u>a</div>
<div class="box" style="left:215.3px;top:1125.4px;width:77.1px;height:41.9px"></div>
<div class="cb" style="left:324.5px;top:1131.4px"></div>
<div style="position:absolute;top:1137.46px;font-size:18px;line-height:18px;white-space:nowrap;color:#2a2e32;letter-spacing:0.8px;left:361.5px;"><u>d</u>ec</div>
<div class="box" style="left:430.4px;top:1125.4px;width:76.8px;height:41.9px"></div>
<div class="cb" style="left:559.2px;top:1131.4px"></div>
<div style="position:absolute;top:1137.46px;font-size:18px;line-height:18px;white-space:nowrap;color:#2a2e32;letter-spacing:0.8px;left:596px;">ra <u>p</u>ulse</div>
<div class="box" style="left:691.7px;top:1125.4px;width:77.2px;height:41.9px"></div>
<div style="position:absolute;top:1138.27px;font-size:17.4px;line-height:17.4px;white-space:nowrap;color:#2a2e32;letter-spacing:1px;right:1240.5px;">0</div>
<div class="cb" style="left:781.5px;top:1131.4px"></div>
<div style="position:absolute;top:1137.46px;font-size:18px;line-height:18px;white-space:nowrap;color:#2a2e32;letter-spacing:0.8px;left:818.6px;">dec</div>
<div class="box" style="left:871.6px;top:1125.4px;width:76.9px;height:41.9px"></div>
<div style="position:absolute;top:1138.27px;font-size:17.4px;line-height:17.4px;white-space:nowrap;color:#2a2e32;letter-spacing:1px;right:1060.9px;">0</div>
<div class="cb" style="left:961.4px;top:1131.4px"></div>
<div style="position:absolute;top:1137.46px;font-size:18px;line-height:18px;white-space:nowrap;color:#2a2e32;letter-spacing:0.8px;left:998.5px;">drift</div>
<div class="box" style="left:1070.9px;top:1125.4px;width:86.7px;height:41.9px"></div>
<div class="cb" style="left:1170.6px;top:1131.4px"></div>
<div style="position:absolute;top:1137.46px;font-size:18px;line-height:18px;white-space:nowrap;color:#2a2e32;letter-spacing:0.8px;left:1207.3px;">rms</div>
<div class="box" style="left:1270.2px;top:1125.4px;width:77.1px;height:41.9px"></div>
<div class="cb" style="left:1359.8px;top:1131.4px"></div>
<div style="position:absolute;top:1137.46px;font-size:18px;line-height:18px;white-space:nowrap;color:#2a2e32;letter-spacing:0.8px;left:1396.8px;"><u>s</u>ky</div>
<div class="box" style="left:1451.6px;top:1125.4px;width:76.9px;height:41.9px"></div>
<div class="cb" style="left:1541.4px;top:1131.4px"></div>
<div style="position:absolute;top:1137.46px;font-size:18px;line-height:18px;white-space:nowrap;color:#2a2e32;letter-spacing:0.8px;left:1578.4px;">stars</div>
<div class="box" style="left:1650.9px;top:1125.4px;width:76.9px;height:41.9px"></div>
<div class="cb" style="left:1760.2px;top:1131.4px"></div>
<div style="position:absolute;top:1137.46px;font-size:18px;line-height:18px;white-space:nowrap;color:#2a2e32;letter-spacing:0.8px;left:1797.1px;">s<u>n</u>r</div>
<div class="box" style="left:1850px;top:1125.4px;width:77.2px;height:41.9px"></div>
<div style="position:absolute;top:1184.47px;font-size:20px;line-height:20px;white-space:nowrap;color:#2a2e32;letter-spacing:0.6px;left:35.7px;">Mount</div>
<div class="cb" style="left:125.3px;top:1178.3px"></div>
<div style="position:absolute;top:1184.36px;font-size:18px;line-height:18px;white-space:nowrap;color:#2a2e32;letter-spacing:0.8px;left:162.3px;">ra</div>
<div class="box" style="left:215.3px;top:1172.3px;width:96.8px;height:41.9px"></div>
<div style="position:absolute;top:1185.36px;font-size:16px;line-height:16px;white-space:nowrap;color:#2a2e32;letter-spacing:0.85px;left:221.3px;">13:43:18</div>
<div class="cb" style="left:324.5px;top:1178.3px"></div>
<div style="position:absolute;top:1184.36px;font-size:18px;line-height:18px;white-space:nowrap;color:#2a2e32;letter-spacing:0.8px;left:361.5px;">dec</div>
<div class="box" style="left:430.4px;top:1172.3px;width:115.9px;height:41.9px"></div>
<div style="position:absolute;top:1185.36px;font-size:16px;line-height:16px;white-space:nowrap;color:#2a2e32;letter-spacing:1.7px;left:441px;">28° 15' 46"</div>
<div class="cb" style="left:559.2px;top:1178.3px"></div>
<div style="position:absolute;top:1184.36px;font-size:18px;line-height:18px;white-space:nowrap;color:#2a2e32;letter-spacing:0.8px;left:596px;"><u>a</u>z</div>
<div class="box" style="left:691.7px;top:1172.3px;width:77.2px;height:41.9px"></div>
<div style="position:absolute;top:1185.17px;font-size:17.4px;line-height:17.4px;white-space:nowrap;color:#2a2e32;letter-spacing:1px;right:1240.5px;">252.62</div>
<div class="cb" style="left:781.5px;top:1178.3px"></div>
<div style="position:absolute;top:1184.36px;font-size:18px;line-height:18px;white-space:nowrap;color:#2a2e32;letter-spacing:0.8px;left:818.6px;">alt</div>
<div class="box" style="left:871.6px;top:1172.3px;width:76.9px;height:41.9px"></div>
<div style="position:absolute;top:1185.17px;font-size:17.4px;line-height:17.4px;white-space:nowrap;color:#2a2e32;letter-spacing:1px;right:1060.9px;">49.35</div>
<div class="cb" style="left:961.4px;top:1178.3px"></div>
<div style="position:absolute;top:1184.36px;font-size:18px;line-height:18px;white-space:nowrap;color:#2a2e32;letter-spacing:0.8px;left:998.5px;">s<u>i</u>de</div>
<div class="box" style="left:1070.9px;top:1172.3px;width:76.9px;height:41.9px"></div>
<div style="position:absolute;top:1185.17px;font-size:17.4px;line-height:17.4px;white-space:nowrap;color:#2a2e32;letter-spacing:1px;right:861.6px;">E-&gt;W</div>
<div class="cb" style="left:1170.6px;top:1178.3px"></div>
<div style="position:absolute;top:1184.36px;font-size:18px;line-height:18px;white-space:nowrap;color:#2a2e32;letter-spacing:0.8px;left:1207.3px;">ha</div>
<div class="box" style="left:1270.2px;top:1172.3px;width:77.1px;height:41.9px"></div>
<div style="position:absolute;top:1185.36px;font-size:16px;line-height:16px;white-space:nowrap;color:#2a2e32;letter-spacing:0.85px;left:1276.2px;">+02:59</div>
<div style="position:absolute;top:1231.37px;font-size:20px;line-height:20px;white-space:nowrap;color:#2a2e32;letter-spacing:0.6px;left:35.7px;">Capture</div>
<div class="cb" style="left:125.3px;top:1225.2px"></div>
<div style="position:absolute;top:1231.26px;font-size:18px;line-height:18px;white-space:nowrap;color:#2a2e32;letter-spacing:0.8px;left:162.3px;">hfr</div>
<div class="box" style="left:215.3px;top:1219.2px;width:77.1px;height:41.9px"></div>
<div style="position:absolute;top:1232.07px;font-size:17.4px;line-height:17.4px;white-space:nowrap;color:#2a2e32;letter-spacing:1px;right:1717px;">1.40</div>
<div class="cb" style="left:324.5px;top:1225.2px"></div>
<div style="position:absolute;top:1231.26px;font-size:18px;line-height:18px;white-space:nowrap;color:#2a2e32;letter-spacing:0.8px;left:361.5px;">stars</div>
<div class="box" style="left:430.4px;top:1219.2px;width:76.8px;height:41.9px"></div>
<div style="position:absolute;top:1232.07px;font-size:17.4px;line-height:17.4px;white-space:nowrap;color:#2a2e32;letter-spacing:1px;right:1502.2px;">412</div>
<div class="cb" style="left:559.2px;top:1225.2px"></div>
<div style="position:absolute;top:1231.26px;font-size:18px;line-height:18px;white-space:nowrap;color:#2a2e32;letter-spacing:0.8px;left:596px;"><u>m</u>edian</div>
<div class="box" style="left:691.7px;top:1219.2px;width:77.2px;height:41.9px"></div>
<div style="position:absolute;top:1232.07px;font-size:17.4px;line-height:17.4px;white-space:nowrap;color:#2a2e32;letter-spacing:1px;right:1240.5px;">1184</div>
<div class="cb" style="left:781.5px;top:1225.2px"></div>
<div style="position:absolute;top:1231.26px;font-size:18px;line-height:18px;white-space:nowrap;color:#2a2e32;letter-spacing:0.8px;left:818.6px;"><u>e</u>cc</div>
<div class="box" style="left:871.6px;top:1219.2px;width:76.9px;height:41.9px"></div>
<div style="position:absolute;top:1232.07px;font-size:17.4px;line-height:17.4px;white-space:nowrap;color:#2a2e32;letter-spacing:1px;right:1060.9px;">0.50</div>
<div class="cb" style="left:961.4px;top:1225.2px"></div>
<div style="position:absolute;top:1231.26px;font-size:18px;line-height:18px;white-space:nowrap;color:#2a2e32;letter-spacing:0.8px;left:998.5px;"><u>t</u>emp</div>
<div class="box" style="left:1070.9px;top:1219.2px;width:86.7px;height:41.9px"></div>
<div style="position:absolute;top:1232.07px;font-size:17.4px;line-height:17.4px;white-space:nowrap;color:#2a2e32;letter-spacing:1px;right:851.8px;">10.30</div>
<div class="cb" style="left:1170.6px;top:1225.2px"></div>
<div style="position:absolute;top:1231.26px;font-size:18px;line-height:18px;white-space:nowrap;color:#2a2e32;letter-spacing:0.8px;left:1207.3px;">rms</div>
<div class="box" style="left:1270.2px;top:1219.2px;width:77.1px;height:41.9px"></div>
<div class="cb" style="left:1359.8px;top:1225.2px"></div>
<div style="position:absolute;top:1231.26px;font-size:18px;line-height:18px;white-space:nowrap;color:#2a2e32;letter-spacing:0.8px;left:1396.8px;">dist</div>
<div class="box" style="left:1451.6px;top:1219.2px;width:76.9px;height:41.9px"></div>
<div style="position:absolute;top:1232.07px;font-size:17.4px;line-height:17.4px;white-space:nowrap;color:#2a2e32;letter-spacing:1px;right:480.9px;">44"</div>
<div class="cb" style="left:1541.4px;top:1225.2px"><svg width="26.5" height="26.5" viewBox="0 0 26.5 26.5" style="left:-2px;top:-2px"><path d="M5.2,13.6 L10.6,20.6 L21.6,4.8" fill="none" stroke="#232629" stroke-width="3.4" stroke-linejoin="miter"/></svg></div>
<div style="position:absolute;top:1231.26px;font-size:18px;line-height:18px;white-space:nowrap;color:#2a2e32;letter-spacing:0.8px;left:1578.4px;">foc<u>u</u>s</div>
<div class="box" style="left:1650.9px;top:1219.2px;width:96.3px;height:41.9px"></div>
<div style="position:absolute;top:1232.07px;font-size:17.4px;line-height:17.4px;white-space:nowrap;color:#2a2e32;letter-spacing:1px;right:262.2px;">17999</div>
<div class="cb" style="left:18.1px;top:1276.2px"><svg width="26.5" height="26.5" viewBox="0 0 26.5 26.5" style="left:-2px;top:-2px"><path d="M5.2,13.6 L10.6,20.6 L21.6,4.8" fill="none" stroke="#232629" stroke-width="3.4" stroke-linejoin="miter"/></svg></div>
<div style="position:absolute;top:1277.36px;font-size:24.5px;line-height:24.5px;white-space:nowrap;color:#2a2e32;letter-spacing:0.6px;left:55.1px;">Details</div>
<div style="position:absolute;left:35.6px;top:1313.4px;width:1127px;height:397.4px;background:#000;border-left:1.5px solid #c8c8c8;border-top:1.2px solid #d8d8d8;box-sizing:border-box"></div>
<div style="position:absolute;top:1321.58px;font-size:24px;line-height:24px;white-space:nowrap;color:#ffff00;letter-spacing:0.1px;left:43.6px;transform-origin:0 0;transform:scaleX(1.07);">Focus</div>
<div style="position:absolute;top:1321.58px;font-size:24px;line-height:24px;white-space:nowrap;color:#ffff00;letter-spacing:0.1px;left:238.9px;transform-origin:0 0;transform:scaleX(1.09);">successful</div>
<div style="position:absolute;top:1360.64px;font-size:24px;line-height:24px;white-space:nowrap;color:#ffff00;letter-spacing:0.1px;left:43.6px;transform-origin:0 0;transform:scaleX(1.07);">Date</div>
<div style="position:absolute;top:1360.64px;font-size:24px;line-height:24px;white-space:nowrap;color:#fff;letter-spacing:0.1px;left:238.9px;transform-origin:0 0;transform:scaleX(1.08);">31.05.2023</div>
<div style="position:absolute;top:1399.7px;font-size:24px;line-height:24px;white-space:nowrap;color:#ffff00;letter-spacing:0.1px;left:43.6px;transform-origin:0 0;transform:scaleX(1.07);">Interval</div>
<div style="position:absolute;top:1399.7px;font-size:24px;line-height:24px;white-space:nowrap;color:#fff;letter-spacing:0.1px;left:238.9px;transform-origin:0 0;transform:scaleX(1.08);">11133.285</div>
<div style="position:absolute;top:1399.7px;font-size:24px;line-height:24px;white-space:nowrap;color:#fff;letter-spacing:0.1px;left:434.6px;transform-origin:0 0;transform:scaleX(1.08);">11245.701</div>
<div style="position:absolute;top:1438.76px;font-size:24px;line-height:24px;white-space:nowrap;color:#ffff00;letter-spacing:0.1px;left:43.6px;transform-origin:0 0;transform:scaleX(1.07);">Clock</div>
<div style="position:absolute;top:1438.76px;font-size:24px;line-height:24px;white-space:nowrap;color:#fff;letter-spacing:0.1px;left:238.9px;transform-origin:0 0;transform:scaleX(1.08);">01:26:34</div>
<div style="position:absolute;top:1438.76px;font-size:24px;line-height:24px;white-space:nowrap;color:#fff;letter-spacing:0.1px;left:434.6px;transform-origin:0 0;transform:scaleX(1.08);">01:28:26</div>
<div style="position:absolute;top:1477.82px;font-size:24px;line-height:24px;white-space:nowrap;color:#ffff00;letter-spacing:0.1px;left:43.6px;transform-origin:0 0;transform:scaleX(1.07);">Duration</div>
<div style="position:absolute;top:1477.82px;font-size:24px;line-height:24px;white-space:nowrap;color:#fff;letter-spacing:0.1px;left:238.9px;transform-origin:0 0;transform:scaleX(1.08);">112.4</div>
<div style="position:absolute;top:1516.88px;font-size:24px;line-height:24px;white-space:nowrap;color:#ffff00;letter-spacing:0.1px;left:43.6px;transform-origin:0 0;transform:scaleX(1.07);">HFR</div>
<div style="position:absolute;top:1516.88px;font-size:24px;line-height:24px;white-space:nowrap;color:#fff;letter-spacing:0.1px;left:238.9px;transform-origin:0 0;transform:scaleX(1.08);">1.50</div>
<div style="position:absolute;top:1555.94px;font-size:24px;line-height:24px;white-space:nowrap;color:#ffff00;letter-spacing:0.1px;left:43.6px;transform-origin:0 0;transform:scaleX(1.07);">Solution</div>
<div style="position:absolute;top:1555.94px;font-size:24px;line-height:24px;white-space:nowrap;color:#fff;letter-spacing:0.1px;left:238.9px;transform-origin:0 0;transform:scaleX(1.08);">17999</div>
<div style="position:absolute;top:1595px;font-size:24px;line-height:24px;white-space:nowrap;color:#ffff00;letter-spacing:0.1px;left:43.6px;transform-origin:0 0;transform:scaleX(1.07);">Iterations</div>
<div style="position:absolute;top:1595px;font-size:24px;line-height:24px;white-space:nowrap;color:#fff;letter-spacing:0.1px;left:238.9px;transform-origin:0 0;transform:scaleX(1.08);">12</div>
<div style="position:absolute;top:1634.06px;font-size:24px;line-height:24px;white-space:nowrap;color:#ffff00;letter-spacing:0.1px;left:43.6px;transform-origin:0 0;transform:scaleX(1.07);">Filter</div>
<div style="position:absolute;top:1634.06px;font-size:24px;line-height:24px;white-space:nowrap;color:#fff;letter-spacing:0.1px;left:238.9px;transform-origin:0 0;transform:scaleX(1.08);">Blue</div>
<div style="position:absolute;top:1673.12px;font-size:24px;line-height:24px;white-space:nowrap;color:#ffff00;letter-spacing:0.1px;left:43.6px;transform-origin:0 0;transform:scaleX(1.07);">Temperature</div>
<div style="position:absolute;top:1673.12px;font-size:24px;line-height:24px;white-space:nowrap;color:#fff;letter-spacing:0.1px;left:238.9px;transform-origin:0 0;transform:scaleX(1.08);">10.3</div>
<svg width="2000" height="1974" viewBox="0 0 2000 1974" shape-rendering="crispEdges">
<rect x="1176" y="1342" width="780.8" height="340.8" fill="#000"/>
<g shape-rendering="geometricPrecision"><line x1="1226" y1="1622.9" x2="1927" y2="1622.9" stroke="#868686" stroke-width="1.7" stroke-dasharray="3.5 2.4"/><line x1="1226" y1="1560.42" x2="1927" y2="1560.42" stroke="#868686" stroke-width="1.7" stroke-dasharray="3.5 2.4"/><line x1="1226" y1="1497.94" x2="1927" y2="1497.94" stroke="#868686" stroke-width="1.7" stroke-dasharray="3.5 2.4"/><line x1="1226" y1="1435.46" x2="1927" y2="1435.46" stroke="#868686" stroke-width="1.7" stroke-dasharray="3.5 2.4"/><line x1="1226" y1="1372.98" x2="1927" y2="1372.98" stroke="#868686" stroke-width="1.7" stroke-dasharray="3.5 2.4"/><line x1="1220.7" y1="1372.98" x2="1220.7" y2="1634.6" stroke="#868686" stroke-width="1.7" stroke-dasharray="3.5 2.4"/><line x1="1322.54" y1="1372.98" x2="1322.54" y2="1634.6" stroke="#868686" stroke-width="1.7" stroke-dasharray="3.5 2.4"/><line x1="1424.38" y1="1372.98" x2="1424.38" y2="1634.6" stroke="#868686" stroke-width="1.7" stroke-dasharray="3.5 2.4"/><line x1="1526.21" y1="1372.98" x2="1526.21" y2="1634.6" stroke="#868686" stroke-width="1.7" stroke-dasharray="3.5 2.4"/><line x1="1628.05" y1="1372.98" x2="1628.05" y2="1634.6" stroke="#868686" stroke-width="1.7" stroke-dasharray="3.5 2.4"/><line x1="1729.89" y1="1372.98" x2="1729.89" y2="1634.6" stroke="#868686" stroke-width="1.7" stroke-dasharray="3.5 2.4"/><line x1="1831.72" y1="1372.98" x2="1831.72" y2="1634.6" stroke="#868686" stroke-width="1.7" stroke-dasharray="3.5 2.4"/></g>
<line x1="1215.1" y1="1367.5" x2="1215.1" y2="1635.6" stroke="#fff" stroke-width="2"/>
<line x1="1214.1" y1="1634.6" x2="1928.8" y2="1634.6" stroke="#fff" stroke-width="2"/>
<line x1="1215.1" y1="1622.9" x2="1226.1" y2="1622.9" stroke="#fff" stroke-width="2"/><line x1="1215.1" y1="1607.28" x2="1220.6" y2="1607.28" stroke="#fff" stroke-width="2"/><line x1="1215.1" y1="1591.66" x2="1220.6" y2="1591.66" stroke="#fff" stroke-width="2"/><line x1="1215.1" y1="1576.04" x2="1220.6" y2="1576.04" stroke="#fff" stroke-width="2"/><line x1="1215.1" y1="1560.42" x2="1226.1" y2="1560.42" stroke="#fff" stroke-width="2"/><line x1="1215.1" y1="1544.8" x2="1220.6" y2="1544.8" stroke="#fff" stroke-width="2"/><line x1="1215.1" y1="1529.18" x2="1220.6" y2="1529.18" stroke="#fff" stroke-width="2"/><line x1="1215.1" y1="1513.56" x2="1220.6" y2="1513.56" stroke="#fff" stroke-width="2"/><line x1="1215.1" y1="1497.94" x2="1226.1" y2="1497.94" stroke="#fff" stroke-width="2"/><line x1="1215.1" y1="1482.32" x2="1220.6" y2="1482.32" stroke="#fff" stroke-width="2"/><line x1="1215.1" y1="1466.7" x2="1220.6" y2="1466.7" stroke="#fff" stroke-width="2"/><line x1="1215.1" y1="1451.08" x2="1220.6" y2="1451.08" stroke="#fff" stroke-width="2"/><line x1="1215.1" y1="1435.46" x2="1226.1" y2="1435.46" stroke="#fff" stroke-width="2"/><line x1="1215.1" y1="1419.84" x2="1220.6" y2="1419.84" stroke="#fff" stroke-width="2"/><line x1="1215.1" y1="1404.22" x2="1220.6" y2="1404.22" stroke="#fff" stroke-width="2"/><line x1="1215.1" y1="1388.6" x2="1220.6" y2="1388.6" stroke="#fff" stroke-width="2"/><line x1="1215.1" y1="1372.98" x2="1226.1" y2="1372.98" stroke="#fff" stroke-width="2"/><line x1="1220.7" y1="1623.6" x2="1220.7" y2="1634.6" stroke="#fff" stroke-width="2"/><line x1="1241.07" y1="1629.6" x2="1241.07" y2="1634.6" stroke="#fff" stroke-width="2"/><line x1="1261.43" y1="1629.6" x2="1261.43" y2="1634.6" stroke="#fff" stroke-width="2"/><line x1="1281.8" y1="1629.6" x2="1281.8" y2="1634.6" stroke="#fff" stroke-width="2"/><line x1="1302.17" y1="1629.6" x2="1302.17" y2="1634.6" stroke="#fff" stroke-width="2"/><line x1="1322.54" y1="1623.6" x2="1322.54" y2="1634.6" stroke="#fff" stroke-width="2"/><line x1="1342.9" y1="1629.6" x2="1342.9" y2="1634.6" stroke="#fff" stroke-width="2"/><line x1="1363.27" y1="1629.6" x2="1363.27" y2="1634.6" stroke="#fff" stroke-width="2"/><line x1="1383.64" y1="1629.6" x2="1383.64" y2="1634.6" stroke="#fff" stroke-width="2"/><line x1="1404.01" y1="1629.6" x2="1404.01" y2="1634.6" stroke="#fff" stroke-width="2"/><line x1="1424.38" y1="1623.6" x2="1424.38" y2="1634.6" stroke="#fff" stroke-width="2"/><line x1="1444.74" y1="1629.6" x2="1444.74" y2="1634.6" stroke="#fff" stroke-width="2"/><line x1="1465.11" y1="1629.6" x2="1465.11" y2="1634.6" stroke="#fff" stroke-width="2"/><line x1="1485.48" y1="1629.6" x2="1485.48" y2="1634.6" stroke="#fff" stroke-width="2"/><line x1="1505.85" y1="1629.6" x2="1505.85" y2="1634.6" stroke="#fff" stroke-width="2"/><line x1="1526.21" y1="1623.6" x2="1526.21" y2="1634.6" stroke="#fff" stroke-width="2"/><line x1="1546.58" y1="1629.6" x2="1546.58" y2="1634.6" stroke="#fff" stroke-width="2"/><line x1="1566.95" y1="1629.6" x2="1566.95" y2="1634.6" stroke="#fff" stroke-width="2"/><line x1="1587.32" y1="1629.6" x2="1587.32" y2="1634.6" stroke="#fff" stroke-width="2"/><line x1="1607.68" y1="1629.6" x2="1607.68" y2="1634.6" stroke="#fff" stroke-width="2"/><line x1="1628.05" y1="1623.6" x2="1628.05" y2="1634.6" stroke="#fff" stroke-width="2"/><line x1="1648.42" y1="1629.6" x2="1648.42" y2="1634.6" stroke="#fff" stroke-width="2"/><line x1="1668.79" y1="1629.6" x2="1668.79" y2="1634.6" stroke="#fff" stroke-width="2"/><line x1="1689.15" y1="1629.6" x2="1689.15" y2="1634.6" stroke="#fff" stroke-width="2"/><line x1="1709.52" y1="1629.6" x2="1709.52" y2="1634.6" stroke="#fff" stroke-width="2"/><line x1="1729.89" y1="1623.6" x2="1729.89" y2="1634.6" stroke="#fff" stroke-width="2"/><line x1="1750.26" y1="1629.6" x2="1750.26" y2="1634.6" stroke="#fff" stroke-width="2"/><line x1="1770.62" y1="1629.6" x2="1770.62" y2="1634.6" stroke="#fff" stroke-width="2"/><line x1="1790.99" y1="1629.6" x2="1790.99" y2="1634.6" stroke="#fff" stroke-width="2"/><line x1="1811.36" y1="1629.6" x2="1811.36" y2="1634.6" stroke="#fff" stroke-width="2"/><line x1="1831.72" y1="1623.6" x2="1831.72" y2="1634.6" stroke="#fff" stroke-width="2"/><line x1="1852.09" y1="1629.6" x2="1852.09" y2="1634.6" stroke="#fff" stroke-width="2"/><line x1="1872.46" y1="1629.6" x2="1872.46" y2="1634.6" stroke="#fff" stroke-width="2"/><line x1="1892.83" y1="1629.6" x2="1892.83" y2="1634.6" stroke="#fff" stroke-width="2"/><line x1="1913.2" y1="1629.6" x2="1913.2" y2="1634.6" stroke="#fff" stroke-width="2"/>
</svg>
<svg width="2000" height="1974" viewBox="0 0 2000 1974">
<text transform="translate(1201.6,1631.1) scale(1.1,1)" x="0" y="0" font-size="23" fill="#fff" text-anchor="end">0</text>
<text transform="translate(1201.6,1568.62) scale(1.1,1)" x="0" y="0" font-size="23" fill="#fff" text-anchor="end">2</text>
<text transform="translate(1201.6,1506.14) scale(1.1,1)" x="0" y="0" font-size="23" fill="#fff" text-anchor="end">4</text>
<text transform="translate(1201.6,1443.66) scale(1.1,1)" x="0" y="0" font-size="23" fill="#fff" text-anchor="end">6</text>
<text transform="translate(1201.6,1381.18) scale(1.1,1)" x="0" y="0" font-size="23" fill="#fff" text-anchor="end">8</text>
<text transform="translate(1220.7,1664.7) scale(1.09,1)" x="0" y="0" font-size="23" fill="#fff" text-anchor="middle">17900</text>
<text transform="translate(1322.54,1664.7) scale(1.09,1)" x="0" y="0" font-size="23" fill="#fff" text-anchor="middle">17925</text>
<text transform="translate(1424.38,1664.7) scale(1.09,1)" x="0" y="0" font-size="23" fill="#fff" text-anchor="middle">17950</text>
<text transform="translate(1526.21,1664.7) scale(1.09,1)" x="0" y="0" font-size="23" fill="#fff" text-anchor="middle">17975</text>
<text transform="translate(1628.05,1664.7) scale(1.09,1)" x="0" y="0" font-size="23" fill="#fff" text-anchor="middle">18000</text>
<text transform="translate(1729.89,1664.7) scale(1.09,1)" x="0" y="0" font-size="23" fill="#fff" text-anchor="middle">18025</text>
<text transform="translate(1831.72,1664.7) scale(1.09,1)" x="0" y="0" font-size="23" fill="#fff" text-anchor="middle">18050</text>
<text x="1325" y="1390.7" font-size="18" fill="#fff" letter-spacing="1.62">L1P [Blue]: Hyperbola (W) Solution: 17999, R²=0.99</text>
<path d="M1266.6,1455.1 C1276.83,1458.58 1307.6,1468.6 1328,1476 C1348.4,1483.4 1368.67,1490.67 1389,1499.5 C1409.33,1508.33 1429.67,1519.83 1450,1529 C1470.33,1538.17 1490.67,1547.17 1511,1554.5 C1531.33,1561.83 1556.33,1568.67 1572,1573 C1587.67,1577.33 1594.67,1578.9 1605,1580.5 C1615.33,1582.1 1624.5,1582.77 1634,1582.6 C1643.5,1582.43 1651.9,1581.77 1662,1579.5 C1672.1,1577.23 1679.03,1575 1694.6,1569 C1710.17,1563 1735.17,1551.58 1755.4,1543.5 C1775.63,1535.42 1800.63,1526.48 1816,1520.5 C1831.37,1514.52 1842.33,1509.75 1847.6,1507.6" fill="none" stroke="#c8c8c8" stroke-width="1.3"/>
<circle cx="1877.8" cy="1510.2" r="14.3" fill="#fff"/>
<text x="1877.8" y="1517.3" font-size="20.3" fill="#ff0000" text-anchor="middle">1</text>
<circle cx="1816.3" cy="1522.3" r="14.3" fill="#fff"/>
<text x="1816.3" y="1529.4" font-size="20.3" fill="#ff0000" text-anchor="middle">2</text>
<circle cx="1755.4" cy="1543.1" r="14.3" fill="#fff"/>
<text x="1755.4" y="1550.2" font-size="20.3" fill="#ff0000" text-anchor="middle">3</text>
<circle cx="1694.6" cy="1567.6" r="14.3" fill="#fff"/>
<text x="1694.6" y="1574.7" font-size="20.3" fill="#ff0000" text-anchor="middle">4</text>
<circle cx="1633.8" cy="1582.7" r="14.3" fill="#fff"/>
<text x="1633.8" y="1589.8" font-size="20.3" fill="#ff0000" text-anchor="middle">5</text>
<circle cx="1572" cy="1572.3" r="14.3" fill="#fff"/>
<text x="1572" y="1579.4" font-size="20.3" fill="#ff0000" text-anchor="middle">6</text>
<circle cx="1511.2" cy="1555.2" r="14.3" fill="#fff"/>
<text x="1511.2" y="1562.3" font-size="20.3" fill="#ff0000" text-anchor="middle">7</text>
<circle cx="1449.9" cy="1530.1" r="14.3" fill="#fff"/>
<text x="1449.9" y="1537.2" font-size="20.3" fill="#ff0000" text-anchor="middle">8</text>
<circle cx="1389" cy="1498.8" r="14.3" fill="#fff"/>
<text x="1389" y="1505.9" font-size="20.3" fill="#ff0000" text-anchor="middle">9</text>
<circle cx="1328.2" cy="1459.8" r="14.3" fill="#fff"/>
<text x="1328.05" y="1466.9" font-size="20.3" fill="#ff0000" text-anchor="middle" letter-spacing="-0.3">10</text>
<circle cx="1266.6" cy="1455.1" r="14.3" fill="#fff"/>
<text x="1266.45" y="1462.2" font-size="20.3" fill="#ff0000" text-anchor="middle" letter-spacing="-0.3">11</text>
<circle cx="1624.8" cy="1576.7" r="14.3" fill="#ffff00"/>
<text x="1624.65" y="1583.8" font-size="20.3" fill="#ff0000" text-anchor="middle" letter-spacing="-0.3">12</text>
<text x="1633.8" y="1589.8" font-size="20.3" fill="#ff0000" text-anchor="middle">5</text>
</svg>
<div style="position:absolute;left:-2px;top:1742.3px;width:1828.6px;height:240px;box-sizing:border-box;border:1.5px solid #c9cacb;background:linear-gradient(#fcfcfc 0,#fcfcfc 190px,#e9e9e9 232px)"></div>
<div style="position:absolute;top:1755.04px;font-size:25px;line-height:25px;white-space:nowrap;color:#2a2e32;letter-spacing:0.55px;left:6.6px;"><span style="letter-spacing:1.17px">2023-05-31T07:09:58</span> INDI services stopped.</div>
<div style="position:absolute;top:1786.24px;font-size:25px;line-height:25px;white-space:nowrap;color:#2a2e32;letter-spacing:0.55px;left:6.6px;"><span style="letter-spacing:1.17px">2023-05-31T07:09:58</span> ASI EAF is disconnected.</div>
<div style="position:absolute;top:1817.44px;font-size:25px;line-height:25px;white-space:nowrap;color:#2a2e32;letter-spacing:0.55px;left:6.6px;"><span style="letter-spacing:1.17px">2023-05-31T07:09:57</span> EQMod Mount is disconnected.</div>
<div style="position:absolute;top:1848.64px;font-size:25px;line-height:25px;white-space:nowrap;color:#2a2e32;letter-spacing:0.55px;left:6.6px;"><span style="letter-spacing:1.17px">2023-05-31T07:09:57</span> ZWO CCD ASI224MC is disconnected.</div>
<div style="position:absolute;top:1879.84px;font-size:25px;line-height:25px;white-space:nowrap;color:#2a2e32;letter-spacing:0.55px;left:6.6px;"><span style="letter-spacing:1.17px">2023-05-31T07:09:57</span> ZWO CCD ASI1600MM Pro is disconnected.</div>
<div style="position:absolute;top:1911.04px;font-size:25px;line-height:25px;white-space:nowrap;color:#2a2e32;letter-spacing:0.55px;left:6.6px;"><span style="letter-spacing:1.17px">2023-05-31T07:09:57</span> ASI EFW is disconnected.</div>
<div style="position:absolute;top:1942.24px;font-size:25px;line-height:25px;white-space:nowrap;color:#2a2e32;letter-spacing:0.55px;left:6.6px;"><span style="letter-spacing:1.17px">2023-05-31T07:09:57</span> Pegasus PPBA is disconnected.</div>
<div style="position:absolute;left:1799.6px;top:1743.8px;width:26.2px;height:232px;background:linear-gradient(90deg,#f2f2f2,#fdfdfd 40%,#fafafa);border-left:1.2px solid #cfcfcf;box-sizing:border-box"></div>
<div style="position:absolute;left:1799.6px;top:1768.4px;width:26.2px;height:1.6px;background:#c6c6c6"></div>
<div style="position:absolute;left:1799.6px;top:1821.8px;width:26.2px;height:127px;background:#e6e6e6;border:1.2px solid #c6c6c6;border-right:none;box-sizing:border-box"></div>
<svg width="2000" height="1974" viewBox="0 0 2000 1974"><path d="M1804.8,1760.2 h15 l-7.5,-8 z" fill="#6f7274"/><path d="M1804.8,1958 h15 l-7.5,8 z" fill="#6f7274"/></svg>
<svg width="2000" height="1974" viewBox="0 0 2000 1974"><g fill="#b9babb"><circle cx="982" cy="1737" r="1.1"/><circle cx="988.3" cy="1737" r="1.1"/><circle cx="994.6" cy="1737" r="1.1"/><circle cx="1000.9" cy="1737" r="1.1"/><circle cx="1007.2" cy="1737" r="1.1"/><circle cx="1013.5" cy="1737" r="1.1"/></g></svg>
<div class="btn" style="left:1840.6px;top:1873.5px;width:154.8px;height:45.6px"></div>
<div style="position:absolute;top:1884.94px;font-size:25px;line-height:25px;white-space:nowrap;color:#2a2e32;letter-spacing:0.5px;left:1917.85px;transform:translateX(-50%);"><u>O</u>ptions...</div>
<div class="btn" style="left:1840.6px;top:1932.3px;width:154.8px;height:46px"></div>
<div style="position:absolute;top:1943.44px;font-size:25px;line-height:25px;white-space:nowrap;color:#2a2e32;letter-spacing:0.5px;left:1917.85px;transform:translateX(-50%);"><u>C</u>lear</div>
<svg width="2000" height="1974" viewBox="0 0 2000 1974">
<rect x="14.6" y="690.5" width="137.35" height="404.6" fill="none" stroke="#ff2600" stroke-width="10.6"/>
<rect x="1534.8" y="1200.05" width="240.85" height="72.35" fill="none" stroke="#ff2600" stroke-width="10.5"/>
</svg>
</div></body></html>
